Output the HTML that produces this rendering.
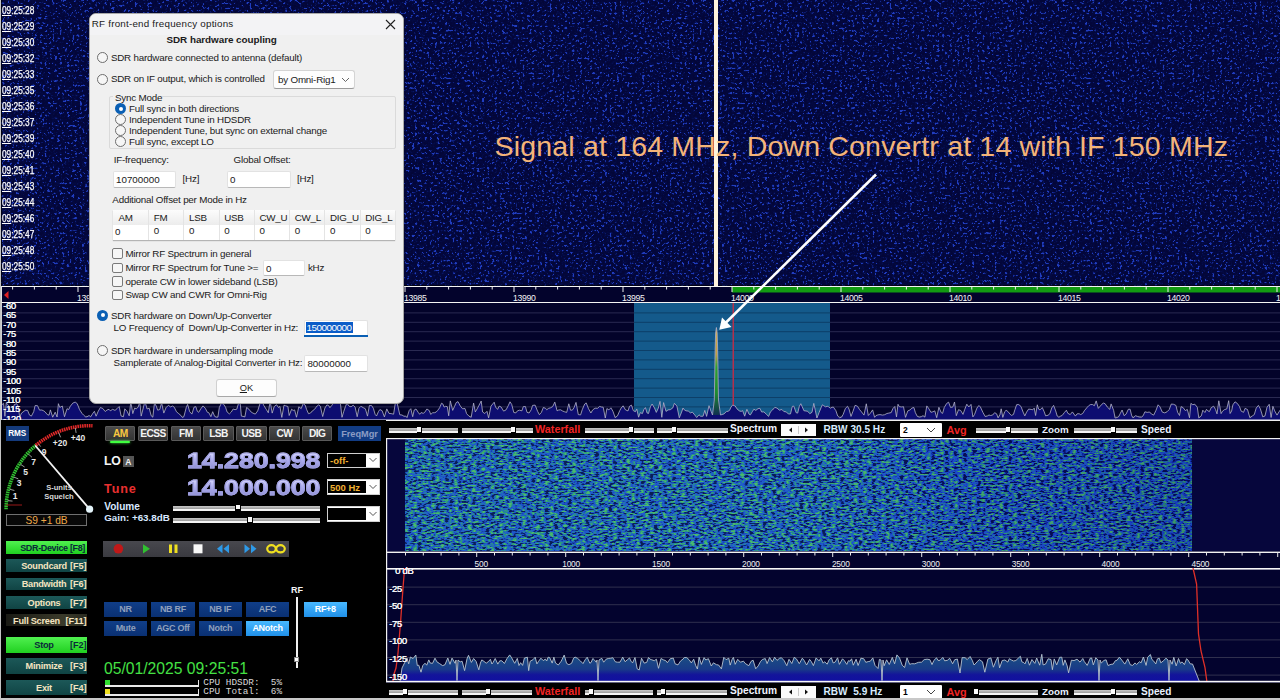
<!DOCTYPE html>
<html><head><meta charset="utf-8">
<style>
*{margin:0;padding:0;box-sizing:border-box}
html,body{width:1280px;height:700px;overflow:hidden;background:#000;font-family:'Liberation Sans',sans-serif;}
.a{position:absolute}
.t{position:absolute;white-space:pre;line-height:1}
</style></head><body>

<svg class="a" style="left:0;top:0" width="1280" height="287">
<defs>
<filter id="wf1" x="0" y="0" width="1280" height="287" filterUnits="userSpaceOnUse" color-interpolation-filters="sRGB">
<feTurbulence type="fractalNoise" baseFrequency="0.4" numOctaves="2" seed="11" result="n"/>
<feColorMatrix in="n" type="matrix" values="2.5 0 0 0 -0.75  2.5 0 0 0 -0.75  2.5 0 0 0 -0.75  0 0 0 0 1"/>
<feComponentTransfer>
<feFuncR type="table" tableValues="0.012 0.012 0.012 0.012 0.012 0.012 0.012 0.014 0.022 0.06 0.13"/>
<feFuncG type="table" tableValues="0.025 0.025 0.025 0.027 0.029 0.031 0.035 0.04 0.06 0.13 0.24"/>
<feFuncB type="table" tableValues="0.22 0.22 0.225 0.23 0.235 0.245 0.255 0.27 0.32 0.5 0.75"/>
</feComponentTransfer>
</filter>
</defs>
<rect x="0" y="0" width="1280" height="287" filter="url(#wf1)"/>
<rect x="0" y="0" width="1.6" height="287" fill="#000"/><rect x="0" y="0" width="0.9" height="287" fill="#d8d8d8"/><rect x="0" y="285.4" width="1280" height="1" fill="#000"/>
</svg>
<div class="t" style="left:2.2px;top:6.4px;font-size:10px;letter-spacing:0px;color:#fafafa;-webkit-text-stroke:0.25px #fff;transform:scaleX(0.83);transform-origin:0 0"><span style="text-decoration:underline;text-underline-offset:0.5px">09</span>:25:28</div>
<div class="t" style="left:2.2px;top:22.4px;font-size:10px;letter-spacing:0px;color:#fafafa;-webkit-text-stroke:0.25px #fff;transform:scaleX(0.83);transform-origin:0 0"><span style="text-decoration:underline;text-underline-offset:0.5px">09</span>:25:29</div>
<div class="t" style="left:2.2px;top:38.4px;font-size:10px;letter-spacing:0px;color:#fafafa;-webkit-text-stroke:0.25px #fff;transform:scaleX(0.83);transform-origin:0 0"><span style="text-decoration:underline;text-underline-offset:0.5px">09</span>:25:30</div>
<div class="t" style="left:2.2px;top:54.4px;font-size:10px;letter-spacing:0px;color:#fafafa;-webkit-text-stroke:0.25px #fff;transform:scaleX(0.83);transform-origin:0 0"><span style="text-decoration:underline;text-underline-offset:0.5px">09</span>:25:32</div>
<div class="t" style="left:2.2px;top:70.4px;font-size:10px;letter-spacing:0px;color:#fafafa;-webkit-text-stroke:0.25px #fff;transform:scaleX(0.83);transform-origin:0 0"><span style="text-decoration:underline;text-underline-offset:0.5px">09</span>:25:33</div>
<div class="t" style="left:2.2px;top:86.4px;font-size:10px;letter-spacing:0px;color:#fafafa;-webkit-text-stroke:0.25px #fff;transform:scaleX(0.83);transform-origin:0 0"><span style="text-decoration:underline;text-underline-offset:0.5px">09</span>:25:35</div>
<div class="t" style="left:2.2px;top:102.4px;font-size:10px;letter-spacing:0px;color:#fafafa;-webkit-text-stroke:0.25px #fff;transform:scaleX(0.83);transform-origin:0 0"><span style="text-decoration:underline;text-underline-offset:0.5px">09</span>:25:36</div>
<div class="t" style="left:2.2px;top:118.4px;font-size:10px;letter-spacing:0px;color:#fafafa;-webkit-text-stroke:0.25px #fff;transform:scaleX(0.83);transform-origin:0 0"><span style="text-decoration:underline;text-underline-offset:0.5px">09</span>:25:37</div>
<div class="t" style="left:2.2px;top:134.4px;font-size:10px;letter-spacing:0px;color:#fafafa;-webkit-text-stroke:0.25px #fff;transform:scaleX(0.83);transform-origin:0 0"><span style="text-decoration:underline;text-underline-offset:0.5px">09</span>:25:39</div>
<div class="t" style="left:2.2px;top:150.4px;font-size:10px;letter-spacing:0px;color:#fafafa;-webkit-text-stroke:0.25px #fff;transform:scaleX(0.83);transform-origin:0 0"><span style="text-decoration:underline;text-underline-offset:0.5px">09</span>:25:40</div>
<div class="t" style="left:2.2px;top:166.4px;font-size:10px;letter-spacing:0px;color:#fafafa;-webkit-text-stroke:0.25px #fff;transform:scaleX(0.83);transform-origin:0 0"><span style="text-decoration:underline;text-underline-offset:0.5px">09</span>:25:41</div>
<div class="t" style="left:2.2px;top:182.4px;font-size:10px;letter-spacing:0px;color:#fafafa;-webkit-text-stroke:0.25px #fff;transform:scaleX(0.83);transform-origin:0 0"><span style="text-decoration:underline;text-underline-offset:0.5px">09</span>:25:43</div>
<div class="t" style="left:2.2px;top:198.4px;font-size:10px;letter-spacing:0px;color:#fafafa;-webkit-text-stroke:0.25px #fff;transform:scaleX(0.83);transform-origin:0 0"><span style="text-decoration:underline;text-underline-offset:0.5px">09</span>:25:44</div>
<div class="t" style="left:2.2px;top:214.4px;font-size:10px;letter-spacing:0px;color:#fafafa;-webkit-text-stroke:0.25px #fff;transform:scaleX(0.83);transform-origin:0 0"><span style="text-decoration:underline;text-underline-offset:0.5px">09</span>:25:46</div>
<div class="t" style="left:2.2px;top:230.4px;font-size:10px;letter-spacing:0px;color:#fafafa;-webkit-text-stroke:0.25px #fff;transform:scaleX(0.83);transform-origin:0 0"><span style="text-decoration:underline;text-underline-offset:0.5px">09</span>:25:47</div>
<div class="t" style="left:2.2px;top:246.4px;font-size:10px;letter-spacing:0px;color:#fafafa;-webkit-text-stroke:0.25px #fff;transform:scaleX(0.83);transform-origin:0 0"><span style="text-decoration:underline;text-underline-offset:0.5px">09</span>:25:48</div>
<div class="t" style="left:2.2px;top:262.4px;font-size:10px;letter-spacing:0px;color:#fafafa;-webkit-text-stroke:0.25px #fff;transform:scaleX(0.83);transform-origin:0 0"><span style="text-decoration:underline;text-underline-offset:0.5px">09</span>:25:50</div>
<div class="a" style="left:714px;top:0;width:4px;height:287px;background:#fff3dc"></div>
<svg class="a" style="left:0;top:286px" width="1280" height="17"><rect x="0" y="0" width="1280" height="17" fill="#03032c"/><rect x="0" y="0" width="1280" height="1" fill="#f4f4f4"/><rect x="732" y="1" width="548" height="5.5" fill="#129a12"/><rect x="0" y="16" width="1280" height="1" fill="#f4f4f4"/><rect x="1" y="0" width="1" height="17" fill="#e0e0e0"/><polygon points="4,9 8.5,5 8.5,13" fill="#e02020"/><rect x="12.1" y="1" width="1" height="2.5" fill="#f0f0f0"/><rect x="33.9" y="1" width="1" height="2.5" fill="#f0f0f0"/><rect x="55.7" y="1" width="1" height="2.5" fill="#f0f0f0"/><rect x="77.5" y="1" width="1" height="5" fill="#f0f0f0"/><rect x="99.3" y="1" width="1" height="2.5" fill="#f0f0f0"/><rect x="121.1" y="1" width="1" height="2.5" fill="#f0f0f0"/><rect x="142.9" y="1" width="1" height="2.5" fill="#f0f0f0"/><rect x="164.7" y="1" width="1" height="2.5" fill="#f0f0f0"/><rect x="186.5" y="1" width="1" height="5" fill="#f0f0f0"/><rect x="208.3" y="1" width="1" height="2.5" fill="#f0f0f0"/><rect x="230.1" y="1" width="1" height="2.5" fill="#f0f0f0"/><rect x="251.9" y="1" width="1" height="2.5" fill="#f0f0f0"/><rect x="273.7" y="1" width="1" height="2.5" fill="#f0f0f0"/><rect x="295.5" y="1" width="1" height="5" fill="#f0f0f0"/><rect x="317.3" y="1" width="1" height="2.5" fill="#f0f0f0"/><rect x="339.1" y="1" width="1" height="2.5" fill="#f0f0f0"/><rect x="360.9" y="1" width="1" height="2.5" fill="#f0f0f0"/><rect x="382.7" y="1" width="1" height="2.5" fill="#f0f0f0"/><rect x="404.5" y="1" width="1" height="5" fill="#f0f0f0"/><rect x="426.3" y="1" width="1" height="2.5" fill="#f0f0f0"/><rect x="448.1" y="1" width="1" height="2.5" fill="#f0f0f0"/><rect x="469.9" y="1" width="1" height="2.5" fill="#f0f0f0"/><rect x="491.7" y="1" width="1" height="2.5" fill="#f0f0f0"/><rect x="513.5" y="1" width="1" height="5" fill="#f0f0f0"/><rect x="535.3" y="1" width="1" height="2.5" fill="#f0f0f0"/><rect x="557.1" y="1" width="1" height="2.5" fill="#f0f0f0"/><rect x="578.9" y="1" width="1" height="2.5" fill="#f0f0f0"/><rect x="600.7" y="1" width="1" height="2.5" fill="#f0f0f0"/><rect x="622.5" y="1" width="1" height="5" fill="#f0f0f0"/><rect x="644.3" y="1" width="1" height="2.5" fill="#f0f0f0"/><rect x="666.1" y="1" width="1" height="2.5" fill="#f0f0f0"/><rect x="687.9" y="1" width="1" height="2.5" fill="#f0f0f0"/><rect x="709.7" y="1" width="1" height="2.5" fill="#f0f0f0"/><rect x="731.5" y="1" width="1" height="5" fill="#f0f0f0"/><rect x="753.3" y="1" width="1" height="2.5" fill="#f0f0f0"/><rect x="775.1" y="1" width="1" height="2.5" fill="#f0f0f0"/><rect x="796.9" y="1" width="1" height="2.5" fill="#f0f0f0"/><rect x="818.7" y="1" width="1" height="2.5" fill="#f0f0f0"/><rect x="840.5" y="1" width="1" height="5" fill="#f0f0f0"/><rect x="862.3" y="1" width="1" height="2.5" fill="#f0f0f0"/><rect x="884.1" y="1" width="1" height="2.5" fill="#f0f0f0"/><rect x="905.9" y="1" width="1" height="2.5" fill="#f0f0f0"/><rect x="927.7" y="1" width="1" height="2.5" fill="#f0f0f0"/><rect x="949.5" y="1" width="1" height="5" fill="#f0f0f0"/><rect x="971.3" y="1" width="1" height="2.5" fill="#f0f0f0"/><rect x="993.1" y="1" width="1" height="2.5" fill="#f0f0f0"/><rect x="1014.9" y="1" width="1" height="2.5" fill="#f0f0f0"/><rect x="1036.7" y="1" width="1" height="2.5" fill="#f0f0f0"/><rect x="1058.5" y="1" width="1" height="5" fill="#f0f0f0"/><rect x="1080.3" y="1" width="1" height="2.5" fill="#f0f0f0"/><rect x="1102.1" y="1" width="1" height="2.5" fill="#f0f0f0"/><rect x="1123.9" y="1" width="1" height="2.5" fill="#f0f0f0"/><rect x="1145.7" y="1" width="1" height="2.5" fill="#f0f0f0"/><rect x="1167.5" y="1" width="1" height="5" fill="#f0f0f0"/><rect x="1189.3" y="1" width="1" height="2.5" fill="#f0f0f0"/><rect x="1211.1" y="1" width="1" height="2.5" fill="#f0f0f0"/><rect x="1232.9" y="1" width="1" height="2.5" fill="#f0f0f0"/><rect x="1254.7" y="1" width="1" height="2.5" fill="#f0f0f0"/><rect x="1276.5" y="1" width="1" height="5" fill="#f0f0f0"/></svg>
<div class="t" style="left:77.0px;top:293.5px;font-size:8.7px;letter-spacing:-0.35px;color:#f4f4f4">13970</div>
<div class="t" style="left:186.0px;top:293.5px;font-size:8.7px;letter-spacing:-0.35px;color:#f4f4f4">13975</div>
<div class="t" style="left:295.0px;top:293.5px;font-size:8.7px;letter-spacing:-0.35px;color:#f4f4f4">13980</div>
<div class="t" style="left:404.0px;top:293.5px;font-size:8.7px;letter-spacing:-0.35px;color:#f4f4f4">13985</div>
<div class="t" style="left:513.0px;top:293.5px;font-size:8.7px;letter-spacing:-0.35px;color:#f4f4f4">13990</div>
<div class="t" style="left:622.0px;top:293.5px;font-size:8.7px;letter-spacing:-0.35px;color:#f4f4f4">13995</div>
<div class="t" style="left:731.0px;top:293.5px;font-size:8.7px;letter-spacing:-0.35px;color:#f4f4f4">14000</div>
<div class="t" style="left:840.0px;top:293.5px;font-size:8.7px;letter-spacing:-0.35px;color:#f4f4f4">14005</div>
<div class="t" style="left:949.0px;top:293.5px;font-size:8.7px;letter-spacing:-0.35px;color:#f4f4f4">14010</div>
<div class="t" style="left:1058.0px;top:293.5px;font-size:8.7px;letter-spacing:-0.35px;color:#f4f4f4">14015</div>
<div class="t" style="left:1167.0px;top:293.5px;font-size:8.7px;letter-spacing:-0.35px;color:#f4f4f4">14020</div>
<div class="t" style="left:1276.0px;top:293.5px;font-size:8.7px;letter-spacing:-0.35px;color:#f4f4f4">14025</div>
<svg class="a" style="left:0;top:303px" width="1280" height="118"><rect x="0" y="0" width="1280" height="118" fill="#03032a"/><rect x="634" y="0" width="196" height="117" fill="#145a8b"/><rect x="0" y="9.4" width="634" height="1" fill="#2a2a52"/><rect x="830" y="9.4" width="450" height="1" fill="#2a2a52"/><rect x="634" y="9.4" width="196" height="1" fill="#0d3f68"/><rect x="0" y="18.8" width="634" height="1" fill="#2a2a52"/><rect x="830" y="18.8" width="450" height="1" fill="#2a2a52"/><rect x="634" y="18.8" width="196" height="1" fill="#0d3f68"/><rect x="0" y="28.2" width="634" height="1" fill="#2a2a52"/><rect x="830" y="28.2" width="450" height="1" fill="#2a2a52"/><rect x="634" y="28.2" width="196" height="1" fill="#0d3f68"/><rect x="0" y="37.6" width="634" height="1" fill="#2a2a52"/><rect x="830" y="37.6" width="450" height="1" fill="#2a2a52"/><rect x="634" y="37.6" width="196" height="1" fill="#0d3f68"/><rect x="0" y="47.0" width="634" height="1" fill="#2a2a52"/><rect x="830" y="47.0" width="450" height="1" fill="#2a2a52"/><rect x="634" y="47.0" width="196" height="1" fill="#0d3f68"/><rect x="0" y="56.4" width="634" height="1" fill="#2a2a52"/><rect x="830" y="56.4" width="450" height="1" fill="#2a2a52"/><rect x="634" y="56.4" width="196" height="1" fill="#0d3f68"/><rect x="0" y="65.8" width="634" height="1" fill="#2a2a52"/><rect x="830" y="65.8" width="450" height="1" fill="#2a2a52"/><rect x="634" y="65.8" width="196" height="1" fill="#0d3f68"/><rect x="0" y="75.2" width="634" height="1" fill="#2a2a52"/><rect x="830" y="75.2" width="450" height="1" fill="#2a2a52"/><rect x="634" y="75.2" width="196" height="1" fill="#0d3f68"/><rect x="0" y="84.6" width="634" height="1" fill="#2a2a52"/><rect x="830" y="84.6" width="450" height="1" fill="#2a2a52"/><rect x="634" y="84.6" width="196" height="1" fill="#0d3f68"/><rect x="0" y="94.0" width="634" height="1" fill="#2a2a52"/><rect x="830" y="94.0" width="450" height="1" fill="#2a2a52"/><rect x="634" y="94.0" width="196" height="1" fill="#0d3f68"/><rect x="0" y="103.4" width="634" height="1" fill="#2a2a52"/><rect x="830" y="103.4" width="450" height="1" fill="#2a2a52"/><rect x="634" y="103.4" width="196" height="1" fill="#0d3f68"/><rect x="0" y="112.8" width="634" height="1" fill="#2a2a52"/><rect x="830" y="112.8" width="450" height="1" fill="#2a2a52"/><rect x="634" y="112.8" width="196" height="1" fill="#0d3f68"/><rect x="732.5" y="0" width="1.5" height="117" fill="#b3304c"/><polygon points="0,117 0.0,99.1 1.4,102.2 3.5,100.3 4.9,113.3 6.3,99.8 8.7,102.7 10.7,108.8 12.9,107.9 14.2,101.7 16.6,100.7 18.2,103.1 19.7,114.1 21.5,110.1 23.0,109.0 25.2,107.3 27.6,107.4 29.5,112.1 31.4,113.1 33.7,108.7 35.1,102.6 37.5,102.7 39.5,107.1 41.8,107.0 43.8,107.9 45.2,109.0 47.2,111.5 49.0,112.2 50.4,106.9 52.7,114.2 55.2,109.2 57.1,114.0 58.4,100.7 59.8,104.5 62.3,103.0 64.5,113.7 67.0,105.7 68.6,106.6 70.4,103.1 72.8,100.1 75.2,99.1 77.2,100.6 79.6,106.7 82.0,110.4 83.6,112.1 85.5,113.8 87.0,113.8 89.1,112.5 90.6,113.9 93.0,110.1 94.4,108.3 96.1,113.2 98.3,108.1 100.4,104.5 102.8,105.5 105.2,108.5 107.0,107.0 109.0,106.3 110.3,107.8 112.7,106.3 115.0,107.4 117.2,105.5 119.2,103.5 121.1,113.0 123.4,113.7 124.8,105.8 127.2,108.5 129.2,112.8 130.8,98.9 132.8,110.6 134.6,105.1 136.4,105.8 138.2,104.0 139.8,98.9 141.2,113.1 143.0,106.0 144.9,98.3 147.1,106.0 149.2,105.2 151.2,112.8 152.8,114.2 154.5,99.8 156.2,103.0 157.7,107.2 159.8,106.5 161.6,99.7 163.8,110.1 166.0,104.7 168.4,102.3 170.5,103.9 172.6,103.0 174.3,104.3 176.5,108.8 178.8,110.7 180.9,112.5 182.5,114.6 183.9,113.6 186.2,104.7 187.6,101.3 189.7,108.7 191.9,111.1 194.0,104.2 195.8,103.6 197.3,108.3 198.7,109.3 200.8,105.8 203.0,102.9 205.3,105.3 207.4,109.3 208.8,109.7 210.9,113.7 212.7,108.7 214.6,113.3 216.2,114.2 217.9,114.1 219.3,104.6 221.4,100.1 223.7,101.3 225.6,104.4 227.1,109.0 229.4,110.9 231.3,109.0 233.2,106.0 235.0,106.7 236.8,106.2 238.5,100.4 240.0,98.1 241.4,113.1 242.8,113.4 244.9,113.9 246.6,104.4 248.9,106.2 251.2,109.1 252.9,110.1 255.3,111.1 257.7,107.9 260.0,100.5 262.2,98.5 263.8,102.5 266.3,106.4 268.3,109.8 270.1,98.2 272.2,110.1 274.2,103.6 276.5,101.7 278.5,104.5 279.9,103.4 281.8,114.4 284.0,102.2 285.4,102.7 287.9,103.5 289.2,112.5 291.6,106.2 293.2,107.5 294.6,106.9 296.5,114.2 298.8,103.8 301.2,105.6 303.2,100.5 305.1,102.0 306.7,106.7 308.5,110.7 310.6,110.0 312.2,108.0 314.5,106.4 315.8,104.6 317.1,103.0 318.6,101.9 320.3,103.2 322.7,113.5 324.9,105.0 326.9,101.9 328.5,102.4 329.9,104.7 331.7,102.5 333.4,100.0 335.5,100.5 337.3,98.8 338.8,99.0 340.3,99.5 342.0,114.3 343.8,108.3 345.5,103.4 346.8,100.2 349.2,103.3 351.1,103.8 353.2,102.2 355.1,104.2 357.2,113.7 358.9,105.3 360.9,103.3 363.3,104.7 365.4,105.8 367.5,113.1 369.4,102.5 371.6,102.6 373.4,105.4 375.1,111.3 376.5,113.0 378.5,108.5 379.9,106.5 382.1,107.7 384.4,113.9 386.8,105.9 389.0,110.4 391.1,110.6 393.6,111.2 395.7,97.7 397.3,100.7 399.8,111.8 402.0,112.0 404.0,113.3 405.7,113.1 407.0,114.6 409.2,107.5 410.8,105.7 412.7,113.7 414.2,107.0 416.0,106.0 418.3,109.5 419.7,111.3 421.0,109.6 423.2,110.3 424.5,109.6 426.9,106.0 429.3,107.6 430.7,111.4 432.6,109.8 434.5,109.7 436.1,109.1 437.6,107.5 439.6,104.8 441.5,100.2 442.8,100.9 444.1,104.1 445.7,103.3 447.3,103.7 448.7,112.8 450.3,97.9 452.7,107.4 454.5,103.5 456.1,99.7 458.0,98.6 460.4,103.2 462.6,105.8 465.0,105.5 466.6,110.7 469.0,113.2 471.2,114.3 473.6,100.1 475.3,108.9 477.2,105.8 479.0,102.3 481.2,98.0 482.6,109.0 484.8,110.5 487.0,108.3 488.6,114.9 491.0,103.0 492.7,101.0 494.2,99.2 495.5,104.0 497.6,106.4 499.2,103.1 501.1,104.0 503.6,108.1 506.0,106.9 508.2,102.8 510.0,98.8 511.7,101.4 513.8,109.5 515.9,109.9 517.5,107.8 519.5,107.2 521.9,107.8 523.3,103.6 525.4,103.5 527.0,109.3 529.1,110.0 531.2,106.8 532.6,102.4 535.1,102.1 537.6,108.3 539.4,111.7 541.4,109.4 543.3,104.5 545.4,105.2 546.8,106.8 548.3,105.5 550.5,104.8 552.7,103.6 554.8,99.1 557.1,107.8 558.6,107.0 560.6,106.8 562.6,108.0 564.6,108.8 566.7,109.4 568.8,100.8 570.5,107.2 572.4,107.1 574.1,104.5 576.0,99.4 578.3,111.6 580.6,111.9 582.2,106.8 584.7,101.0 586.2,99.9 588.5,105.7 590.9,110.0 592.7,106.9 595.1,105.2 597.5,105.3 599.7,103.4 601.2,104.0 603.2,104.2 605.3,115.0 606.9,105.6 608.9,106.9 610.9,104.8 612.9,108.2 615.2,114.7 617.5,112.8 619.8,107.5 621.2,105.0 623.1,102.8 625.5,106.9 628.0,107.9 629.5,103.3 631.4,102.1 633.4,107.7 635.4,108.7 636.8,106.1 638.6,114.2 640.3,109.6 642.4,110.6 643.9,106.5 645.4,104.6 647.1,110.0 648.5,110.5 650.4,103.8 652.1,101.0 654.5,105.0 656.3,109.4 658.3,105.2 660.0,98.4 661.8,114.3 663.6,99.6 666.0,108.4 668.1,106.9 670.3,106.7 672.8,104.9 674.4,100.3 676.9,103.1 679.3,114.8 681.6,109.1 683.0,105.0 684.5,107.1 686.0,107.8 688.3,108.1 690.5,109.9 692.3,109.1 694.7,111.9 696.7,114.5 699.0,111.8 700.7,113.3 703.1,113.2 704.8,107.4 706.6,113.4 709.0,102.7 711.0,108.2 712.5,112.0 714.3,97.0 715.2,45.0 715.6,30.0 716.4,24.5 717.2,30.0 717.6,45.0 718.5,97.0 720.5,112.0 724.0,110.9 726.4,108.6 728.0,108.3 729.6,107.3 731.0,104.0 732.7,102.1 735.2,103.0 737.0,105.9 739.4,107.9 741.2,108.4 742.6,107.6 744.7,113.2 746.9,106.3 749.0,111.1 750.4,111.9 752.5,108.4 753.9,106.2 755.8,107.4 758.0,105.7 759.9,105.3 761.6,109.0 763.9,108.9 766.2,111.1 768.6,113.4 770.4,108.9 772.5,107.0 774.8,104.4 777.0,105.1 779.4,107.2 781.9,106.5 783.8,108.5 786.3,108.9 788.4,111.0 790.5,110.9 792.3,103.4 793.8,103.1 796.1,109.7 797.7,110.1 799.3,103.4 800.8,100.7 802.2,103.7 803.9,107.7 806.0,108.0 807.7,108.3 809.8,110.7 812.0,109.3 813.8,100.4 815.4,107.8 816.9,115.0 819.1,109.5 821.0,104.8 822.4,101.8 823.8,102.8 825.7,103.9 827.2,103.3 828.6,103.8 830.3,105.2 832.0,104.3 833.4,104.1 835.9,107.7 837.7,113.0 839.7,114.8 841.6,114.1 843.2,111.3 845.4,105.4 847.5,103.3 849.0,106.0 851.0,113.4 853.0,108.2 855.1,102.3 857.5,103.3 859.6,106.6 861.5,108.9 864.0,112.1 866.3,100.8 868.3,112.5 870.3,110.3 872.6,106.9 874.6,114.3 876.0,112.6 877.9,111.9 880.0,111.6 882.5,112.1 884.7,111.7 886.9,110.5 888.8,110.1 891.2,109.6 892.9,105.6 894.8,103.5 896.5,113.9 898.0,101.3 899.3,103.7 901.7,104.0 903.5,103.7 905.5,114.3 907.8,107.9 910.2,106.9 911.8,105.1 913.9,104.5 915.4,109.7 917.3,113.4 919.4,114.1 921.4,113.7 923.0,112.7 924.9,114.1 926.8,102.9 928.9,105.8 930.9,109.3 932.7,108.8 934.8,107.9 936.7,114.7 938.9,104.3 941.2,109.6 942.6,110.4 944.2,104.6 946.6,100.5 948.6,99.2 950.5,104.4 952.8,104.1 954.5,99.0 956.3,112.7 958.5,106.7 960.7,107.5 963.0,111.4 964.6,106.8 966.8,101.2 968.8,104.0 971.0,101.4 972.9,113.9 974.5,111.6 976.9,105.1 978.9,102.5 980.4,104.0 982.9,109.4 985.2,113.5 987.5,112.9 989.0,112.0 990.6,112.5 992.7,112.0 994.6,109.7 996.6,110.8 998.1,114.9 999.9,111.9 1001.2,105.8 1002.8,114.4 1004.7,108.7 1006.1,107.3 1007.8,108.4 1010.1,111.2 1011.5,112.4 1013.5,111.4 1014.9,106.7 1016.7,101.6 1018.8,101.6 1021.0,103.5 1023.1,109.1 1024.8,112.9 1026.6,109.1 1028.6,106.1 1031.1,106.4 1032.8,106.8 1034.2,105.1 1035.6,112.5 1037.3,101.8 1038.6,106.1 1040.0,106.9 1042.3,104.6 1044.2,108.8 1045.6,112.8 1048.0,112.3 1049.9,110.7 1051.7,105.0 1053.6,102.4 1055.7,107.9 1057.2,113.0 1058.9,114.3 1060.5,113.2 1062.1,112.5 1064.5,109.4 1066.4,107.2 1067.8,110.3 1070.2,111.6 1072.4,108.9 1073.9,111.0 1075.4,113.1 1077.0,110.9 1079.1,110.7 1080.7,111.6 1082.8,110.4 1084.3,107.8 1086.7,104.9 1088.6,102.8 1090.4,101.6 1092.4,101.5 1094.4,102.7 1096.2,97.9 1098.3,105.4 1100.3,103.1 1101.9,101.2 1103.4,100.1 1105.1,100.7 1107.3,104.0 1109.8,106.4 1111.1,100.9 1113.6,107.3 1115.1,115.0 1117.6,114.4 1118.9,113.4 1120.4,110.2 1122.1,107.0 1124.1,112.7 1126.1,111.1 1128.3,106.3 1130.1,106.2 1131.7,112.7 1133.2,115.0 1135.4,112.7 1137.6,113.5 1139.2,114.0 1141.4,114.2 1143.1,112.8 1144.9,108.8 1147.2,109.4 1149.6,109.0 1151.4,111.0 1153.7,112.1 1156.0,107.3 1158.1,101.8 1160.0,103.9 1162.3,109.1 1164.8,109.9 1167.0,108.8 1169.2,106.6 1171.3,101.0 1173.6,101.3 1175.9,102.4 1177.6,109.3 1179.5,112.5 1181.1,103.6 1183.2,104.7 1185.3,107.6 1187.3,106.4 1189.5,114.8 1190.9,100.4 1192.8,101.7 1194.8,101.2 1197.3,104.3 1198.8,115.0 1201.3,112.9 1202.8,107.2 1204.9,109.5 1206.5,106.3 1208.1,108.0 1209.4,108.6 1211.2,104.7 1213.6,103.2 1215.5,106.4 1217.0,110.9 1218.8,97.8 1221.1,110.6 1222.5,108.2 1224.5,106.6 1226.8,105.9 1228.7,97.7 1230.1,110.5 1231.6,108.0 1232.9,101.8 1235.0,98.8 1237.4,100.5 1239.5,103.6 1241.2,108.2 1243.6,109.3 1245.0,105.4 1247.5,106.5 1249.9,114.8 1252.4,112.9 1254.3,111.6 1256.2,105.1 1258.4,102.4 1260.4,105.9 1262.8,113.9 1265.0,112.9 1267.0,104.3 1269.2,101.3 1271.1,114.5 1272.9,103.3 1274.7,107.9 1277.0,112.1 1278.9,109.0 1280.4,106.8 1282,117" fill="#0d0d70"/><defs><linearGradient id="pkg" x1="0" y1="0" x2="0" y2="1"><stop offset="0" stop-color="#d0b040"/><stop offset="0.3" stop-color="#c0a040"/><stop offset="0.45" stop-color="#30a030"/><stop offset="0.75" stop-color="#208a30"/><stop offset="1" stop-color="#103050"/></linearGradient></defs><polygon points="713,112 714.5,97 715.3,45 715.7,30 716.4,25 717.1,30 717.5,45 718.3,97 719.8,112" fill="url(#pkg)"/><polyline points="0.0,99.1 1.4,102.2 3.5,100.3 4.9,113.3 6.3,99.8 8.7,102.7 10.7,108.8 12.9,107.9 14.2,101.7 16.6,100.7 18.2,103.1 19.7,114.1 21.5,110.1 23.0,109.0 25.2,107.3 27.6,107.4 29.5,112.1 31.4,113.1 33.7,108.7 35.1,102.6 37.5,102.7 39.5,107.1 41.8,107.0 43.8,107.9 45.2,109.0 47.2,111.5 49.0,112.2 50.4,106.9 52.7,114.2 55.2,109.2 57.1,114.0 58.4,100.7 59.8,104.5 62.3,103.0 64.5,113.7 67.0,105.7 68.6,106.6 70.4,103.1 72.8,100.1 75.2,99.1 77.2,100.6 79.6,106.7 82.0,110.4 83.6,112.1 85.5,113.8 87.0,113.8 89.1,112.5 90.6,113.9 93.0,110.1 94.4,108.3 96.1,113.2 98.3,108.1 100.4,104.5 102.8,105.5 105.2,108.5 107.0,107.0 109.0,106.3 110.3,107.8 112.7,106.3 115.0,107.4 117.2,105.5 119.2,103.5 121.1,113.0 123.4,113.7 124.8,105.8 127.2,108.5 129.2,112.8 130.8,98.9 132.8,110.6 134.6,105.1 136.4,105.8 138.2,104.0 139.8,98.9 141.2,113.1 143.0,106.0 144.9,98.3 147.1,106.0 149.2,105.2 151.2,112.8 152.8,114.2 154.5,99.8 156.2,103.0 157.7,107.2 159.8,106.5 161.6,99.7 163.8,110.1 166.0,104.7 168.4,102.3 170.5,103.9 172.6,103.0 174.3,104.3 176.5,108.8 178.8,110.7 180.9,112.5 182.5,114.6 183.9,113.6 186.2,104.7 187.6,101.3 189.7,108.7 191.9,111.1 194.0,104.2 195.8,103.6 197.3,108.3 198.7,109.3 200.8,105.8 203.0,102.9 205.3,105.3 207.4,109.3 208.8,109.7 210.9,113.7 212.7,108.7 214.6,113.3 216.2,114.2 217.9,114.1 219.3,104.6 221.4,100.1 223.7,101.3 225.6,104.4 227.1,109.0 229.4,110.9 231.3,109.0 233.2,106.0 235.0,106.7 236.8,106.2 238.5,100.4 240.0,98.1 241.4,113.1 242.8,113.4 244.9,113.9 246.6,104.4 248.9,106.2 251.2,109.1 252.9,110.1 255.3,111.1 257.7,107.9 260.0,100.5 262.2,98.5 263.8,102.5 266.3,106.4 268.3,109.8 270.1,98.2 272.2,110.1 274.2,103.6 276.5,101.7 278.5,104.5 279.9,103.4 281.8,114.4 284.0,102.2 285.4,102.7 287.9,103.5 289.2,112.5 291.6,106.2 293.2,107.5 294.6,106.9 296.5,114.2 298.8,103.8 301.2,105.6 303.2,100.5 305.1,102.0 306.7,106.7 308.5,110.7 310.6,110.0 312.2,108.0 314.5,106.4 315.8,104.6 317.1,103.0 318.6,101.9 320.3,103.2 322.7,113.5 324.9,105.0 326.9,101.9 328.5,102.4 329.9,104.7 331.7,102.5 333.4,100.0 335.5,100.5 337.3,98.8 338.8,99.0 340.3,99.5 342.0,114.3 343.8,108.3 345.5,103.4 346.8,100.2 349.2,103.3 351.1,103.8 353.2,102.2 355.1,104.2 357.2,113.7 358.9,105.3 360.9,103.3 363.3,104.7 365.4,105.8 367.5,113.1 369.4,102.5 371.6,102.6 373.4,105.4 375.1,111.3 376.5,113.0 378.5,108.5 379.9,106.5 382.1,107.7 384.4,113.9 386.8,105.9 389.0,110.4 391.1,110.6 393.6,111.2 395.7,97.7 397.3,100.7 399.8,111.8 402.0,112.0 404.0,113.3 405.7,113.1 407.0,114.6 409.2,107.5 410.8,105.7 412.7,113.7 414.2,107.0 416.0,106.0 418.3,109.5 419.7,111.3 421.0,109.6 423.2,110.3 424.5,109.6 426.9,106.0 429.3,107.6 430.7,111.4 432.6,109.8 434.5,109.7 436.1,109.1 437.6,107.5 439.6,104.8 441.5,100.2 442.8,100.9 444.1,104.1 445.7,103.3 447.3,103.7 448.7,112.8 450.3,97.9 452.7,107.4 454.5,103.5 456.1,99.7 458.0,98.6 460.4,103.2 462.6,105.8 465.0,105.5 466.6,110.7 469.0,113.2 471.2,114.3 473.6,100.1 475.3,108.9 477.2,105.8 479.0,102.3 481.2,98.0 482.6,109.0 484.8,110.5 487.0,108.3 488.6,114.9 491.0,103.0 492.7,101.0 494.2,99.2 495.5,104.0 497.6,106.4 499.2,103.1 501.1,104.0 503.6,108.1 506.0,106.9 508.2,102.8 510.0,98.8 511.7,101.4 513.8,109.5 515.9,109.9 517.5,107.8 519.5,107.2 521.9,107.8 523.3,103.6 525.4,103.5 527.0,109.3 529.1,110.0 531.2,106.8 532.6,102.4 535.1,102.1 537.6,108.3 539.4,111.7 541.4,109.4 543.3,104.5 545.4,105.2 546.8,106.8 548.3,105.5 550.5,104.8 552.7,103.6 554.8,99.1 557.1,107.8 558.6,107.0 560.6,106.8 562.6,108.0 564.6,108.8 566.7,109.4 568.8,100.8 570.5,107.2 572.4,107.1 574.1,104.5 576.0,99.4 578.3,111.6 580.6,111.9 582.2,106.8 584.7,101.0 586.2,99.9 588.5,105.7 590.9,110.0 592.7,106.9 595.1,105.2 597.5,105.3 599.7,103.4 601.2,104.0 603.2,104.2 605.3,115.0 606.9,105.6 608.9,106.9 610.9,104.8 612.9,108.2 615.2,114.7 617.5,112.8 619.8,107.5 621.2,105.0 623.1,102.8 625.5,106.9 628.0,107.9 629.5,103.3 631.4,102.1 633.4,107.7 635.4,108.7 636.8,106.1 638.6,114.2 640.3,109.6 642.4,110.6 643.9,106.5 645.4,104.6 647.1,110.0 648.5,110.5 650.4,103.8 652.1,101.0 654.5,105.0 656.3,109.4 658.3,105.2 660.0,98.4 661.8,114.3 663.6,99.6 666.0,108.4 668.1,106.9 670.3,106.7 672.8,104.9 674.4,100.3 676.9,103.1 679.3,114.8 681.6,109.1 683.0,105.0 684.5,107.1 686.0,107.8 688.3,108.1 690.5,109.9 692.3,109.1 694.7,111.9 696.7,114.5 699.0,111.8 700.7,113.3 703.1,113.2 704.8,107.4 706.6,113.4 709.0,102.7 711.0,108.2 712.5,112.0 714.3,97.0 715.2,45.0 715.6,30.0 716.4,24.5 717.2,30.0 717.6,45.0 718.5,97.0 720.5,112.0 724.0,110.9 726.4,108.6 728.0,108.3 729.6,107.3 731.0,104.0 732.7,102.1 735.2,103.0 737.0,105.9 739.4,107.9 741.2,108.4 742.6,107.6 744.7,113.2 746.9,106.3 749.0,111.1 750.4,111.9 752.5,108.4 753.9,106.2 755.8,107.4 758.0,105.7 759.9,105.3 761.6,109.0 763.9,108.9 766.2,111.1 768.6,113.4 770.4,108.9 772.5,107.0 774.8,104.4 777.0,105.1 779.4,107.2 781.9,106.5 783.8,108.5 786.3,108.9 788.4,111.0 790.5,110.9 792.3,103.4 793.8,103.1 796.1,109.7 797.7,110.1 799.3,103.4 800.8,100.7 802.2,103.7 803.9,107.7 806.0,108.0 807.7,108.3 809.8,110.7 812.0,109.3 813.8,100.4 815.4,107.8 816.9,115.0 819.1,109.5 821.0,104.8 822.4,101.8 823.8,102.8 825.7,103.9 827.2,103.3 828.6,103.8 830.3,105.2 832.0,104.3 833.4,104.1 835.9,107.7 837.7,113.0 839.7,114.8 841.6,114.1 843.2,111.3 845.4,105.4 847.5,103.3 849.0,106.0 851.0,113.4 853.0,108.2 855.1,102.3 857.5,103.3 859.6,106.6 861.5,108.9 864.0,112.1 866.3,100.8 868.3,112.5 870.3,110.3 872.6,106.9 874.6,114.3 876.0,112.6 877.9,111.9 880.0,111.6 882.5,112.1 884.7,111.7 886.9,110.5 888.8,110.1 891.2,109.6 892.9,105.6 894.8,103.5 896.5,113.9 898.0,101.3 899.3,103.7 901.7,104.0 903.5,103.7 905.5,114.3 907.8,107.9 910.2,106.9 911.8,105.1 913.9,104.5 915.4,109.7 917.3,113.4 919.4,114.1 921.4,113.7 923.0,112.7 924.9,114.1 926.8,102.9 928.9,105.8 930.9,109.3 932.7,108.8 934.8,107.9 936.7,114.7 938.9,104.3 941.2,109.6 942.6,110.4 944.2,104.6 946.6,100.5 948.6,99.2 950.5,104.4 952.8,104.1 954.5,99.0 956.3,112.7 958.5,106.7 960.7,107.5 963.0,111.4 964.6,106.8 966.8,101.2 968.8,104.0 971.0,101.4 972.9,113.9 974.5,111.6 976.9,105.1 978.9,102.5 980.4,104.0 982.9,109.4 985.2,113.5 987.5,112.9 989.0,112.0 990.6,112.5 992.7,112.0 994.6,109.7 996.6,110.8 998.1,114.9 999.9,111.9 1001.2,105.8 1002.8,114.4 1004.7,108.7 1006.1,107.3 1007.8,108.4 1010.1,111.2 1011.5,112.4 1013.5,111.4 1014.9,106.7 1016.7,101.6 1018.8,101.6 1021.0,103.5 1023.1,109.1 1024.8,112.9 1026.6,109.1 1028.6,106.1 1031.1,106.4 1032.8,106.8 1034.2,105.1 1035.6,112.5 1037.3,101.8 1038.6,106.1 1040.0,106.9 1042.3,104.6 1044.2,108.8 1045.6,112.8 1048.0,112.3 1049.9,110.7 1051.7,105.0 1053.6,102.4 1055.7,107.9 1057.2,113.0 1058.9,114.3 1060.5,113.2 1062.1,112.5 1064.5,109.4 1066.4,107.2 1067.8,110.3 1070.2,111.6 1072.4,108.9 1073.9,111.0 1075.4,113.1 1077.0,110.9 1079.1,110.7 1080.7,111.6 1082.8,110.4 1084.3,107.8 1086.7,104.9 1088.6,102.8 1090.4,101.6 1092.4,101.5 1094.4,102.7 1096.2,97.9 1098.3,105.4 1100.3,103.1 1101.9,101.2 1103.4,100.1 1105.1,100.7 1107.3,104.0 1109.8,106.4 1111.1,100.9 1113.6,107.3 1115.1,115.0 1117.6,114.4 1118.9,113.4 1120.4,110.2 1122.1,107.0 1124.1,112.7 1126.1,111.1 1128.3,106.3 1130.1,106.2 1131.7,112.7 1133.2,115.0 1135.4,112.7 1137.6,113.5 1139.2,114.0 1141.4,114.2 1143.1,112.8 1144.9,108.8 1147.2,109.4 1149.6,109.0 1151.4,111.0 1153.7,112.1 1156.0,107.3 1158.1,101.8 1160.0,103.9 1162.3,109.1 1164.8,109.9 1167.0,108.8 1169.2,106.6 1171.3,101.0 1173.6,101.3 1175.9,102.4 1177.6,109.3 1179.5,112.5 1181.1,103.6 1183.2,104.7 1185.3,107.6 1187.3,106.4 1189.5,114.8 1190.9,100.4 1192.8,101.7 1194.8,101.2 1197.3,104.3 1198.8,115.0 1201.3,112.9 1202.8,107.2 1204.9,109.5 1206.5,106.3 1208.1,108.0 1209.4,108.6 1211.2,104.7 1213.6,103.2 1215.5,106.4 1217.0,110.9 1218.8,97.8 1221.1,110.6 1222.5,108.2 1224.5,106.6 1226.8,105.9 1228.7,97.7 1230.1,110.5 1231.6,108.0 1232.9,101.8 1235.0,98.8 1237.4,100.5 1239.5,103.6 1241.2,108.2 1243.6,109.3 1245.0,105.4 1247.5,106.5 1249.9,114.8 1252.4,112.9 1254.3,111.6 1256.2,105.1 1258.4,102.4 1260.4,105.9 1262.8,113.9 1265.0,112.9 1267.0,104.3 1269.2,101.3 1271.1,114.5 1272.9,103.3 1274.7,107.9 1277.0,112.1 1278.9,109.0 1280.4,106.8" fill="none" stroke="#b4b4c8" stroke-width="0.8"/><rect x="0" y="116.5" width="1280" height="1.5" fill="#f0f0f0"/><rect x="1" y="0" width="1" height="117" fill="#d0d0d0"/></svg>
<div class="t" style="left:3px;top:301.0px;font-size:9.6px;letter-spacing:-0.4px;color:#f8f8f8;text-shadow:0.35px 0 0 #fff">-60</div>
<div class="t" style="left:3px;top:310.4px;font-size:9.6px;letter-spacing:-0.4px;color:#f8f8f8;text-shadow:0.35px 0 0 #fff">-65</div>
<div class="t" style="left:3px;top:319.8px;font-size:9.6px;letter-spacing:-0.4px;color:#f8f8f8;text-shadow:0.35px 0 0 #fff">-70</div>
<div class="t" style="left:3px;top:329.2px;font-size:9.6px;letter-spacing:-0.4px;color:#f8f8f8;text-shadow:0.35px 0 0 #fff">-75</div>
<div class="t" style="left:3px;top:338.6px;font-size:9.6px;letter-spacing:-0.4px;color:#f8f8f8;text-shadow:0.35px 0 0 #fff">-80</div>
<div class="t" style="left:3px;top:348.0px;font-size:9.6px;letter-spacing:-0.4px;color:#f8f8f8;text-shadow:0.35px 0 0 #fff">-85</div>
<div class="t" style="left:3px;top:357.4px;font-size:9.6px;letter-spacing:-0.4px;color:#f8f8f8;text-shadow:0.35px 0 0 #fff">-90</div>
<div class="t" style="left:3px;top:366.8px;font-size:9.6px;letter-spacing:-0.4px;color:#f8f8f8;text-shadow:0.35px 0 0 #fff">-95</div>
<div class="t" style="left:3px;top:376.2px;font-size:9.6px;letter-spacing:-0.4px;color:#f8f8f8;text-shadow:0.35px 0 0 #fff">-100</div>
<div class="t" style="left:3px;top:385.6px;font-size:9.6px;letter-spacing:-0.4px;color:#f8f8f8;text-shadow:0.35px 0 0 #fff">-105</div>
<div class="t" style="left:3px;top:395.0px;font-size:9.6px;letter-spacing:-0.4px;color:#f8f8f8;text-shadow:0.35px 0 0 #fff">-110</div>
<div class="t" style="left:3px;top:404.4px;font-size:9.6px;letter-spacing:-0.4px;color:#f8f8f8;text-shadow:0.35px 0 0 #fff">-115</div>
<div class="t" style="left:3px;top:413.8px;font-size:9.6px;letter-spacing:-0.4px;color:#f8f8f8;text-shadow:0.35px 0 0 #fff">-120</div>
<div class="a" style="left:389px;top:428px;width:27.5px;height:5px;background:linear-gradient(#c8c8c8,#9a9a9a);border-bottom:2px solid #f4f4f4"></div><div class="a" style="left:421.5px;top:428px;width:36.5px;height:5px;background:linear-gradient(#c8c8c8,#9a9a9a);border-bottom:2px solid #f4f4f4"></div><div class="a" style="left:417px;top:427px;width:4px;height:4.7px;background:#fafafa"></div><div class="a" style="left:462px;top:428px;width:48.5px;height:5px;background:linear-gradient(#c8c8c8,#9a9a9a);border-bottom:2px solid #f4f4f4"></div><div class="a" style="left:515.5px;top:428px;width:17.5px;height:5px;background:linear-gradient(#c8c8c8,#9a9a9a);border-bottom:2px solid #f4f4f4"></div><div class="a" style="left:511px;top:427px;width:4px;height:4.7px;background:#fafafa"></div><div class="a" style="left:585px;top:428px;width:43.5px;height:5px;background:linear-gradient(#c8c8c8,#9a9a9a);border-bottom:2px solid #f4f4f4"></div><div class="a" style="left:633.5px;top:428px;width:20.5px;height:5px;background:linear-gradient(#c8c8c8,#9a9a9a);border-bottom:2px solid #f4f4f4"></div><div class="a" style="left:629px;top:427px;width:4px;height:4.7px;background:#fafafa"></div><div class="a" style="left:657px;top:428px;width:14.5px;height:5px;background:linear-gradient(#c8c8c8,#9a9a9a);border-bottom:2px solid #f4f4f4"></div><div class="a" style="left:676.5px;top:428px;width:51.5px;height:5px;background:linear-gradient(#c8c8c8,#9a9a9a);border-bottom:2px solid #f4f4f4"></div><div class="a" style="left:672px;top:427px;width:4px;height:4.7px;background:#fafafa"></div><div class="a" style="left:976px;top:428px;width:29.5px;height:5px;background:linear-gradient(#c8c8c8,#9a9a9a);border-bottom:2px solid #f4f4f4"></div><div class="a" style="left:1010.5px;top:428px;width:27.5px;height:5px;background:linear-gradient(#c8c8c8,#9a9a9a);border-bottom:2px solid #f4f4f4"></div><div class="a" style="left:1006px;top:427px;width:4px;height:4.7px;background:#fafafa"></div><div class="a" style="left:1074px;top:428px;width:36.5px;height:5px;background:linear-gradient(#c8c8c8,#9a9a9a);border-bottom:2px solid #f4f4f4"></div><div class="a" style="left:1115.5px;top:428px;width:21.5px;height:5px;background:linear-gradient(#c8c8c8,#9a9a9a);border-bottom:2px solid #f4f4f4"></div><div class="a" style="left:1111px;top:427px;width:4px;height:4.7px;background:#fafafa"></div><div class="t" style="left:535px;top:424.3px;font-weight:bold;font-size:10.8px;color:#f02424">Waterfall</div><div class="t" style="left:730px;top:424.3px;font-weight:bold;font-size:10.2px;color:#f0f4ff">Spectrum</div><div class="a" style="left:781px;top:424px;width:35px;height:12px;background:#fafafa"></div><div class="a" style="left:798px;top:426px;width:1px;height:8px;background:#c8c8c8"></div><svg class="a" style="left:781px;top:424px" width="35" height="12"><polygon points="8,6 11,3.5 11,8.5" fill="#111"/><polygon points="27,6 24,3.5 24,8.5" fill="#111"/></svg><div class="t" style="left:823.5px;top:424.5px;font-weight:bold;font-size:10.1px;color:#d8ecff">RBW 30.5 Hz</div><div class="a" style="left:900px;top:423px;width:42px;height:14px;background:#fff;border-radius:1px"></div><div class="t" style="left:903px;top:425.5px;font-weight:bold;font-size:8.5px;color:#000">2</div><svg class="a" style="left:926px;top:427px" width="10" height="6"><polyline points="1,1 5,5 9,1" fill="none" stroke="#444" stroke-width="1"/></svg><div class="t" style="left:946.5px;top:424.5px;font-weight:bold;font-size:10.8px;color:#f02424">Avg</div><div class="t" style="left:1042px;top:424.5px;font-weight:bold;font-size:9.8px;color:#e8f0ff">Zoom</div><div class="t" style="left:1141px;top:424.5px;font-weight:bold;font-size:10.1px;color:#e8f0ff">Speed</div>
<div class="a" style="left:389px;top:690px;width:13.5px;height:5px;background:linear-gradient(#c8c8c8,#9a9a9a);border-bottom:2px solid #f4f4f4"></div><div class="a" style="left:407.5px;top:690px;width:50.5px;height:5px;background:linear-gradient(#c8c8c8,#9a9a9a);border-bottom:2px solid #f4f4f4"></div><div class="a" style="left:403px;top:689px;width:4px;height:4.7px;background:#fafafa"></div><div class="a" style="left:462px;top:690px;width:23.5px;height:5px;background:linear-gradient(#c8c8c8,#9a9a9a);border-bottom:2px solid #f4f4f4"></div><div class="a" style="left:490.5px;top:690px;width:41.5px;height:5px;background:linear-gradient(#c8c8c8,#9a9a9a);border-bottom:2px solid #f4f4f4"></div><div class="a" style="left:486px;top:689px;width:4px;height:4.7px;background:#fafafa"></div><div class="a" style="left:585px;top:690px;width:3.5px;height:5px;background:linear-gradient(#c8c8c8,#9a9a9a);border-bottom:2px solid #f4f4f4"></div><div class="a" style="left:593.5px;top:690px;width:59.5px;height:5px;background:linear-gradient(#c8c8c8,#9a9a9a);border-bottom:2px solid #f4f4f4"></div><div class="a" style="left:589px;top:689px;width:4px;height:4.7px;background:#fafafa"></div><div class="a" style="left:657px;top:690px;width:3.5px;height:5px;background:linear-gradient(#c8c8c8,#9a9a9a);border-bottom:2px solid #f4f4f4"></div><div class="a" style="left:665.5px;top:690px;width:61.5px;height:5px;background:linear-gradient(#c8c8c8,#9a9a9a);border-bottom:2px solid #f4f4f4"></div><div class="a" style="left:661px;top:689px;width:4px;height:4.7px;background:#fafafa"></div><div class="a" style="left:974px;top:690px;width:-0.5px;height:5px;background:linear-gradient(#c8c8c8,#9a9a9a);border-bottom:2px solid #f4f4f4"></div><div class="a" style="left:978.5px;top:690px;width:59.5px;height:5px;background:linear-gradient(#c8c8c8,#9a9a9a);border-bottom:2px solid #f4f4f4"></div><div class="a" style="left:974px;top:689px;width:4px;height:4.7px;background:#fafafa"></div><div class="a" style="left:1074px;top:690px;width:36.5px;height:5px;background:linear-gradient(#c8c8c8,#9a9a9a);border-bottom:2px solid #f4f4f4"></div><div class="a" style="left:1115.5px;top:690px;width:21.5px;height:5px;background:linear-gradient(#c8c8c8,#9a9a9a);border-bottom:2px solid #f4f4f4"></div><div class="a" style="left:1111px;top:689px;width:4px;height:4.7px;background:#fafafa"></div><div class="t" style="left:535px;top:686.3px;font-weight:bold;font-size:10.8px;color:#f02424">Waterfall</div><div class="t" style="left:730px;top:686.3px;font-weight:bold;font-size:10.2px;color:#f0f4ff">Spectrum</div><div class="a" style="left:781px;top:686px;width:35px;height:12px;background:#fafafa"></div><div class="a" style="left:798px;top:688px;width:1px;height:8px;background:#c8c8c8"></div><svg class="a" style="left:781px;top:686px" width="35" height="12"><polygon points="8,6 11,3.5 11,8.5" fill="#111"/><polygon points="27,6 24,3.5 24,8.5" fill="#111"/></svg><div class="t" style="left:823.5px;top:686.5px;font-weight:bold;font-size:10.1px;color:#d8ecff">RBW&nbsp; 5.9 Hz</div><div class="a" style="left:900px;top:685px;width:42px;height:14px;background:#fff;border-radius:1px"></div><div class="t" style="left:903px;top:687.5px;font-weight:bold;font-size:8.5px;color:#000">1</div><svg class="a" style="left:926px;top:689px" width="10" height="6"><polyline points="1,1 5,5 9,1" fill="none" stroke="#444" stroke-width="1"/></svg><div class="t" style="left:946.5px;top:686.5px;font-weight:bold;font-size:10.8px;color:#f02424">Avg</div><div class="t" style="left:1042px;top:686.5px;font-weight:bold;font-size:9.8px;color:#e8f0ff">Zoom</div><div class="t" style="left:1141px;top:686.5px;font-weight:bold;font-size:10.1px;color:#e8f0ff">Speed</div>
<svg class="a" style="left:386px;top:438px" width="894" height="114">
<defs>
<filter id="wf2" x="19" y="1" width="787" height="113" filterUnits="userSpaceOnUse" color-interpolation-filters="sRGB">
<feTurbulence type="fractalNoise" baseFrequency="0.22 0.55" numOctaves="2" seed="4" result="n"/>
<feColorMatrix in="n" type="matrix" values="2.5 0 0 0 -0.75  2.5 0 0 0 -0.75  2.5 0 0 0 -0.75  0 0 0 0 1"/>
<feComponentTransfer>
<feFuncR type="table" tableValues="0.02 0.03 0.04 0.08 0.11 0.12 0.13 0.15 0.18 0.22 0.3"/>
<feFuncG type="table" tableValues="0.06 0.07 0.11 0.2 0.28 0.32 0.4 0.5 0.58 0.66 0.72"/>
<feFuncB type="table" tableValues="0.32 0.36 0.47 0.68 0.82 0.86 0.76 0.62 0.5 0.45 0.45"/>
</feComponentTransfer>
</filter>
</defs>
<rect x="0" y="0" width="894" height="114" fill="#06063c"/>
<rect x="19" y="1" width="787" height="113" filter="url(#wf2)"/>
<defs><linearGradient id="wfg" x1="0" y1="0" x2="1" y2="0"><stop offset="0" stop-color="#30c060" stop-opacity="0.1"/><stop offset="0.5" stop-color="#30c060" stop-opacity="0.08"/><stop offset="0.72" stop-color="#000050" stop-opacity="0.1"/><stop offset="1" stop-color="#000050" stop-opacity="0.2"/></linearGradient></defs>
<rect x="19" y="1" width="787" height="113" fill="url(#wfg)"/>
<rect x="0" y="0" width="894" height="1.2" fill="#f2f2f2"/>
<rect x="0" y="0" width="1.2" height="114" fill="#f2f2f2"/>
</svg>
<svg class="a" style="left:386px;top:551px" width="894" height="18"><rect x="0" y="0" width="894" height="18" fill="#03032c"/><rect x="0" y="0.6" width="894" height="1.4" fill="#f2f2f2"/><rect x="0" y="0" width="1.2" height="18" fill="#f2f2f2"/><rect x="19.0" y="1.5" width="1" height="3" fill="#e8e8e8"/><rect x="36.8" y="1.5" width="1" height="3" fill="#e8e8e8"/><rect x="54.6" y="1.5" width="1" height="3" fill="#e8e8e8"/><rect x="72.4" y="1.5" width="1" height="3" fill="#e8e8e8"/><rect x="90.2" y="1.5" width="1" height="4.5" fill="#e8e8e8"/><rect x="108.0" y="1.5" width="1" height="3" fill="#e8e8e8"/><rect x="125.8" y="1.5" width="1" height="3" fill="#e8e8e8"/><rect x="143.6" y="1.5" width="1" height="3" fill="#e8e8e8"/><rect x="161.4" y="1.5" width="1" height="3" fill="#e8e8e8"/><rect x="179.2" y="1.5" width="1" height="4.5" fill="#e8e8e8"/><rect x="197.0" y="1.5" width="1" height="3" fill="#e8e8e8"/><rect x="214.8" y="1.5" width="1" height="3" fill="#e8e8e8"/><rect x="232.6" y="1.5" width="1" height="3" fill="#e8e8e8"/><rect x="250.4" y="1.5" width="1" height="3" fill="#e8e8e8"/><rect x="268.2" y="1.5" width="1" height="4.5" fill="#e8e8e8"/><rect x="286.0" y="1.5" width="1" height="3" fill="#e8e8e8"/><rect x="303.8" y="1.5" width="1" height="3" fill="#e8e8e8"/><rect x="321.6" y="1.5" width="1" height="3" fill="#e8e8e8"/><rect x="339.4" y="1.5" width="1" height="3" fill="#e8e8e8"/><rect x="357.2" y="1.5" width="1" height="4.5" fill="#e8e8e8"/><rect x="375.0" y="1.5" width="1" height="3" fill="#e8e8e8"/><rect x="392.8" y="1.5" width="1" height="3" fill="#e8e8e8"/><rect x="410.6" y="1.5" width="1" height="3" fill="#e8e8e8"/><rect x="428.4" y="1.5" width="1" height="3" fill="#e8e8e8"/><rect x="446.2" y="1.5" width="1" height="4.5" fill="#e8e8e8"/><rect x="464.0" y="1.5" width="1" height="3" fill="#e8e8e8"/><rect x="481.8" y="1.5" width="1" height="3" fill="#e8e8e8"/><rect x="499.6" y="1.5" width="1" height="3" fill="#e8e8e8"/><rect x="517.4" y="1.5" width="1" height="3" fill="#e8e8e8"/><rect x="535.2" y="1.5" width="1" height="4.5" fill="#e8e8e8"/><rect x="553.0" y="1.5" width="1" height="3" fill="#e8e8e8"/><rect x="570.8" y="1.5" width="1" height="3" fill="#e8e8e8"/><rect x="588.6" y="1.5" width="1" height="3" fill="#e8e8e8"/><rect x="606.4" y="1.5" width="1" height="3" fill="#e8e8e8"/><rect x="624.2" y="1.5" width="1" height="4.5" fill="#e8e8e8"/><rect x="642.0" y="1.5" width="1" height="3" fill="#e8e8e8"/><rect x="659.8" y="1.5" width="1" height="3" fill="#e8e8e8"/><rect x="677.6" y="1.5" width="1" height="3" fill="#e8e8e8"/><rect x="695.4" y="1.5" width="1" height="3" fill="#e8e8e8"/><rect x="713.2" y="1.5" width="1" height="4.5" fill="#e8e8e8"/><rect x="731.0" y="1.5" width="1" height="3" fill="#e8e8e8"/><rect x="748.8" y="1.5" width="1" height="3" fill="#e8e8e8"/><rect x="766.6" y="1.5" width="1" height="3" fill="#e8e8e8"/><rect x="784.4" y="1.5" width="1" height="3" fill="#e8e8e8"/><rect x="802.2" y="1.5" width="1" height="4.5" fill="#e8e8e8"/><rect x="820.0" y="1.5" width="1" height="3" fill="#e8e8e8"/><rect x="837.8" y="1.5" width="1" height="3" fill="#e8e8e8"/><rect x="855.6" y="1.5" width="1" height="3" fill="#e8e8e8"/><rect x="873.4" y="1.5" width="1" height="3" fill="#e8e8e8"/><rect x="891.2" y="1.5" width="1" height="4.5" fill="#e8e8e8"/></svg>
<div class="t" style="left:471.7px;top:559.5px;width:19px;text-align:center;font-size:8.4px;letter-spacing:-0.2px;color:#f0f0f0">500</div>
<div class="t" style="left:561.6px;top:559.5px;width:19px;text-align:center;font-size:8.4px;letter-spacing:-0.2px;color:#f0f0f0">1000</div>
<div class="t" style="left:651.5px;top:559.5px;width:19px;text-align:center;font-size:8.4px;letter-spacing:-0.2px;color:#f0f0f0">1500</div>
<div class="t" style="left:741.4px;top:559.5px;width:19px;text-align:center;font-size:8.4px;letter-spacing:-0.2px;color:#f0f0f0">2000</div>
<div class="t" style="left:831.3px;top:559.5px;width:19px;text-align:center;font-size:8.4px;letter-spacing:-0.2px;color:#f0f0f0">2500</div>
<div class="t" style="left:921.2px;top:559.5px;width:19px;text-align:center;font-size:8.4px;letter-spacing:-0.2px;color:#f0f0f0">3000</div>
<div class="t" style="left:1011.1px;top:559.5px;width:19px;text-align:center;font-size:8.4px;letter-spacing:-0.2px;color:#f0f0f0">3500</div>
<div class="t" style="left:1101.0px;top:559.5px;width:19px;text-align:center;font-size:8.4px;letter-spacing:-0.2px;color:#f0f0f0">4000</div>
<div class="t" style="left:1190.9px;top:559.5px;width:19px;text-align:center;font-size:8.4px;letter-spacing:-0.2px;color:#f0f0f0">4500</div>
<svg class="a" style="left:386px;top:568px" width="894" height="115"><defs><linearGradient id="ag" x1="0" y1="0" x2="0" y2="1"><stop offset="0" stop-color="#1b5282"/><stop offset="0.55" stop-color="#193a88"/><stop offset="0.75" stop-color="#13149a"/><stop offset="1" stop-color="#1010a0"/></linearGradient></defs><rect x="0" y="0" width="894" height="115" fill="#03032e"/><rect x="0" y="0" width="894" height="1.6" fill="#f8f8f8"/><rect x="0" y="18.6" width="894" height="1" fill="#30304e"/><rect x="0" y="36.2" width="894" height="1" fill="#30304e"/><rect x="0" y="53.8" width="894" height="1" fill="#30304e"/><rect x="0" y="71.4" width="894" height="1" fill="#30304e"/><rect x="0" y="89.0" width="894" height="1" fill="#30304e"/><rect x="0" y="106.6" width="894" height="1" fill="#30304e"/><polygon points="14.0,113.5 16.0,100.0 19.0,94.0 21.0,90.0 22.7,95.8 24.4,89.0 27.1,90.6 29.8,87.0 31.3,97.5 32.8,97.2 35.0,104.2 36.7,97.7 39.0,95.2 40.7,97.2 42.8,91.9 44.2,95.0 46.5,95.4 49.0,90.2 50.9,93.8 53.6,95.6 56.6,97.6 58.9,96.8 61.8,90.0 64.0,96.3 66.0,90.1 69.1,95.3 70.0,92.0 71.0,112.5 72.0,92.0 74.2,93.9 76.1,93.2 78.6,102.6 81.0,90.8 82.5,87.3 85.4,94.4 87.6,90.5 90.1,93.4 92.8,101.8 94.4,95.0 95.8,91.9 98.0,93.4 100.2,95.2 102.5,93.5 104.4,91.3 105.9,96.0 107.2,94.3 109.2,90.5 111.8,96.1 113.8,92.8 115.9,92.8 118.4,95.5 120.9,90.7 123.7,86.9 125.7,89.9 128.7,95.3 131.3,90.4 133.0,97.5 134.6,94.7 136.6,97.4 138.4,90.1 141.4,89.2 142.7,102.6 144.1,93.3 147.0,91.7 149.2,89.2 150.9,95.9 152.3,93.7 154.9,90.2 157.3,92.6 159.3,91.1 160.7,93.0 162.1,89.2 163.7,89.6 166.2,95.1 167.9,89.2 169.5,95.0 172.3,97.0 175.2,93.2 178.2,87.1 180.6,95.4 182.9,96.7 185.6,95.3 187.6,90.1 189.1,89.1 191.6,90.4 194.5,93.0 197.0,95.6 199.1,91.8 201.2,89.2 203.8,95.2 205.1,94.5 206.8,90.5 208.2,91.7 210.2,94.2 211.0,92.0 212.0,112.5 213.0,92.0 215.8,90.3 217.7,94.2 220.2,91.1 222.8,90.4 224.7,90.3 226.8,89.7 229.4,93.8 231.4,94.2 234.0,94.2 236.7,89.1 239.1,93.7 241.8,91.4 243.5,89.9 245.0,93.2 246.6,94.9 249.0,89.5 251.2,100.8 253.2,102.0 255.5,90.2 258.2,95.1 260.7,94.4 262.5,89.5 264.1,91.2 265.8,91.8 268.3,92.7 270.4,91.2 272.5,100.3 275.0,90.5 277.3,91.8 279.8,92.7 281.4,94.7 284.3,90.7 287.3,90.1 289.1,95.8 292.0,96.9 294.5,93.0 297.0,91.1 298.3,89.5 300.8,89.6 303.4,92.1 305.3,94.9 307.7,91.2 309.6,97.3 311.4,101.0 313.1,89.1 315.4,96.4 318.1,89.6 319.8,92.0 322.4,90.7 325.3,98.0 327.4,94.8 330.5,96.7 332.6,97.0 335.4,100.9 337.8,89.3 340.1,91.7 342.8,90.2 344.2,97.1 346.0,91.6 347.4,89.4 349.2,96.3 351.7,91.3 354.4,94.2 357.5,93.2 359.2,95.4 361.0,96.6 362.8,97.7 365.0,93.4 367.1,92.2 369.7,100.8 372.2,97.9 374.4,93.7 376.3,91.5 379.3,90.6 381.1,95.6 383.6,89.5 386.4,93.9 388.6,89.2 391.0,92.4 393.5,90.3 395.4,89.7 398.2,92.7 400.8,97.7 403.0,91.3 405.8,95.5 408.2,89.3 410.4,90.9 413.3,95.7 416.3,90.2 418.1,92.4 420.6,97.0 423.6,91.4 425.2,93.4 427.4,97.6 430.1,89.9 433.1,92.9 434.8,90.1 437.2,95.2 438.6,93.7 441.2,96.2 443.1,91.8 445.4,89.8 447.2,94.9 449.0,94.2 451.6,89.8 453.4,96.4 456.5,90.8 458.4,92.7 460.8,96.4 462.4,92.7 464.0,93.2 465.6,90.8 467.3,97.2 470.1,91.2 472.1,97.5 474.9,90.2 477.8,90.8 479.8,94.3 482.2,93.6 484.3,93.2 486.8,89.9 489.0,97.4 492.0,100.5 493.4,91.4 495.0,92.0 496.0,112.5 497.0,92.0 498.2,97.7 500.6,91.8 503.3,96.5 506.3,89.4 508.6,95.8 510.9,86.9 513.6,90.1 516.2,97.2 518.6,99.5 521.0,89.8 523.7,96.4 525.6,95.7 528.7,95.8 530.7,95.0 532.6,94.3 535.5,94.2 538.2,91.6 541.1,91.2 543.9,91.7 546.0,96.6 547.9,92.4 550.5,89.8 552.0,92.4 554.0,92.3 556.8,89.4 558.7,92.8 561.4,92.3 563.7,90.3 566.6,95.8 568.7,91.7 571.4,91.1 574.0,105.0 576.1,89.6 579.1,89.7 581.2,91.6 584.1,88.5 586.4,92.6 588.0,97.0 590.0,95.1 591.3,93.5 593.4,91.6 596.5,93.8 598.8,104.2 601.9,91.0 604.9,89.9 607.4,99.2 610.0,92.6 611.9,89.2 613.6,99.8 616.2,92.5 618.9,92.0 621.8,94.1 623.3,90.7 625.8,92.2 627.6,93.0 629.9,92.5 632.9,89.6 634.4,88.3 635.9,93.9 637.7,94.5 639.0,95.9 641.2,90.4 643.5,97.2 645.9,91.5 648.8,95.4 650.7,90.0 653.7,97.2 655.8,86.3 657.1,96.9 659.5,96.1 662.2,90.8 665.0,91.5 666.4,101.7 668.2,90.9 670.7,96.9 673.7,89.3 675.8,89.2 677.2,97.3 678.9,91.9 681.2,97.9 682.6,104.8 685.4,92.2 688.0,92.6 691.0,91.2 694.0,94.1 696.8,90.5 698.2,93.4 701.2,97.4 704.3,90.1 705.7,90.0 707.3,96.9 709.8,89.7 712.0,92.0 713.0,112.5 714.0,92.0 715.3,95.0 718.0,92.4 720.1,91.8 722.0,97.5 725.0,96.3 727.2,96.1 729.3,92.7 731.0,92.3 733.4,89.1 735.9,92.2 738.8,96.1 741.8,90.8 744.3,96.8 746.7,97.4 749.0,94.9 750.6,96.5 753.5,93.7 755.1,94.8 757.4,89.0 760.1,97.4 761.7,89.2 764.4,86.5 765.8,91.3 767.2,92.5 769.8,95.9 771.4,90.9 773.2,90.1 774.8,94.8 777.6,92.7 779.9,90.2 782.0,92.0 783.0,112.5 784.0,92.0 786.1,96.2 787.8,89.3 790.2,97.9 792.5,90.5 794.4,95.3 796.1,93.9 798.4,96.6 800.6,90.7 801.9,91.9 804.3,95.9 806.5,96.0 813.4,113.5" fill="url(#ag)"/><polyline points="14.0,113.5 16.0,100.0 19.0,94.0 21.0,90.0 22.7,95.8 24.4,89.0 27.1,90.6 29.8,87.0 31.3,97.5 32.8,97.2 35.0,104.2 36.7,97.7 39.0,95.2 40.7,97.2 42.8,91.9 44.2,95.0 46.5,95.4 49.0,90.2 50.9,93.8 53.6,95.6 56.6,97.6 58.9,96.8 61.8,90.0 64.0,96.3 66.0,90.1 69.1,95.3 70.0,92.0 71.0,112.5 72.0,92.0 74.2,93.9 76.1,93.2 78.6,102.6 81.0,90.8 82.5,87.3 85.4,94.4 87.6,90.5 90.1,93.4 92.8,101.8 94.4,95.0 95.8,91.9 98.0,93.4 100.2,95.2 102.5,93.5 104.4,91.3 105.9,96.0 107.2,94.3 109.2,90.5 111.8,96.1 113.8,92.8 115.9,92.8 118.4,95.5 120.9,90.7 123.7,86.9 125.7,89.9 128.7,95.3 131.3,90.4 133.0,97.5 134.6,94.7 136.6,97.4 138.4,90.1 141.4,89.2 142.7,102.6 144.1,93.3 147.0,91.7 149.2,89.2 150.9,95.9 152.3,93.7 154.9,90.2 157.3,92.6 159.3,91.1 160.7,93.0 162.1,89.2 163.7,89.6 166.2,95.1 167.9,89.2 169.5,95.0 172.3,97.0 175.2,93.2 178.2,87.1 180.6,95.4 182.9,96.7 185.6,95.3 187.6,90.1 189.1,89.1 191.6,90.4 194.5,93.0 197.0,95.6 199.1,91.8 201.2,89.2 203.8,95.2 205.1,94.5 206.8,90.5 208.2,91.7 210.2,94.2 211.0,92.0 212.0,112.5 213.0,92.0 215.8,90.3 217.7,94.2 220.2,91.1 222.8,90.4 224.7,90.3 226.8,89.7 229.4,93.8 231.4,94.2 234.0,94.2 236.7,89.1 239.1,93.7 241.8,91.4 243.5,89.9 245.0,93.2 246.6,94.9 249.0,89.5 251.2,100.8 253.2,102.0 255.5,90.2 258.2,95.1 260.7,94.4 262.5,89.5 264.1,91.2 265.8,91.8 268.3,92.7 270.4,91.2 272.5,100.3 275.0,90.5 277.3,91.8 279.8,92.7 281.4,94.7 284.3,90.7 287.3,90.1 289.1,95.8 292.0,96.9 294.5,93.0 297.0,91.1 298.3,89.5 300.8,89.6 303.4,92.1 305.3,94.9 307.7,91.2 309.6,97.3 311.4,101.0 313.1,89.1 315.4,96.4 318.1,89.6 319.8,92.0 322.4,90.7 325.3,98.0 327.4,94.8 330.5,96.7 332.6,97.0 335.4,100.9 337.8,89.3 340.1,91.7 342.8,90.2 344.2,97.1 346.0,91.6 347.4,89.4 349.2,96.3 351.7,91.3 354.4,94.2 357.5,93.2 359.2,95.4 361.0,96.6 362.8,97.7 365.0,93.4 367.1,92.2 369.7,100.8 372.2,97.9 374.4,93.7 376.3,91.5 379.3,90.6 381.1,95.6 383.6,89.5 386.4,93.9 388.6,89.2 391.0,92.4 393.5,90.3 395.4,89.7 398.2,92.7 400.8,97.7 403.0,91.3 405.8,95.5 408.2,89.3 410.4,90.9 413.3,95.7 416.3,90.2 418.1,92.4 420.6,97.0 423.6,91.4 425.2,93.4 427.4,97.6 430.1,89.9 433.1,92.9 434.8,90.1 437.2,95.2 438.6,93.7 441.2,96.2 443.1,91.8 445.4,89.8 447.2,94.9 449.0,94.2 451.6,89.8 453.4,96.4 456.5,90.8 458.4,92.7 460.8,96.4 462.4,92.7 464.0,93.2 465.6,90.8 467.3,97.2 470.1,91.2 472.1,97.5 474.9,90.2 477.8,90.8 479.8,94.3 482.2,93.6 484.3,93.2 486.8,89.9 489.0,97.4 492.0,100.5 493.4,91.4 495.0,92.0 496.0,112.5 497.0,92.0 498.2,97.7 500.6,91.8 503.3,96.5 506.3,89.4 508.6,95.8 510.9,86.9 513.6,90.1 516.2,97.2 518.6,99.5 521.0,89.8 523.7,96.4 525.6,95.7 528.7,95.8 530.7,95.0 532.6,94.3 535.5,94.2 538.2,91.6 541.1,91.2 543.9,91.7 546.0,96.6 547.9,92.4 550.5,89.8 552.0,92.4 554.0,92.3 556.8,89.4 558.7,92.8 561.4,92.3 563.7,90.3 566.6,95.8 568.7,91.7 571.4,91.1 574.0,105.0 576.1,89.6 579.1,89.7 581.2,91.6 584.1,88.5 586.4,92.6 588.0,97.0 590.0,95.1 591.3,93.5 593.4,91.6 596.5,93.8 598.8,104.2 601.9,91.0 604.9,89.9 607.4,99.2 610.0,92.6 611.9,89.2 613.6,99.8 616.2,92.5 618.9,92.0 621.8,94.1 623.3,90.7 625.8,92.2 627.6,93.0 629.9,92.5 632.9,89.6 634.4,88.3 635.9,93.9 637.7,94.5 639.0,95.9 641.2,90.4 643.5,97.2 645.9,91.5 648.8,95.4 650.7,90.0 653.7,97.2 655.8,86.3 657.1,96.9 659.5,96.1 662.2,90.8 665.0,91.5 666.4,101.7 668.2,90.9 670.7,96.9 673.7,89.3 675.8,89.2 677.2,97.3 678.9,91.9 681.2,97.9 682.6,104.8 685.4,92.2 688.0,92.6 691.0,91.2 694.0,94.1 696.8,90.5 698.2,93.4 701.2,97.4 704.3,90.1 705.7,90.0 707.3,96.9 709.8,89.7 712.0,92.0 713.0,112.5 714.0,92.0 715.3,95.0 718.0,92.4 720.1,91.8 722.0,97.5 725.0,96.3 727.2,96.1 729.3,92.7 731.0,92.3 733.4,89.1 735.9,92.2 738.8,96.1 741.8,90.8 744.3,96.8 746.7,97.4 749.0,94.9 750.6,96.5 753.5,93.7 755.1,94.8 757.4,89.0 760.1,97.4 761.7,89.2 764.4,86.5 765.8,91.3 767.2,92.5 769.8,95.9 771.4,90.9 773.2,90.1 774.8,94.8 777.6,92.7 779.9,90.2 782.0,92.0 783.0,112.5 784.0,92.0 786.1,96.2 787.8,89.3 790.2,97.9 792.5,90.5 794.4,95.3 796.1,93.9 798.4,96.6 800.6,90.7 801.9,91.9 804.3,95.9 806.5,96.0 813.4,113.5" fill="none" stroke="#b8c4d0" stroke-width="0.9"/><polyline points="18.6,0 17,20 14.5,55 12,85 10,100 8,106 7,113" fill="none" stroke="#e03028" stroke-width="1.3"/><polyline points="807,0 810.6,16 812.5,66 815,83 819,99.7 820.8,113" fill="none" stroke="#e03028" stroke-width="1.3"/><rect x="0" y="112.8" width="894" height="1.6" fill="#f8f8f8"/><rect x="0" y="0" width="1.2" height="114" fill="#f2f2f2"/></svg>
<div class="t" style="left:395px;top:565.9px;font-size:9.6px;letter-spacing:-0.4px;color:#f8f8f8;text-shadow:0.35px 0 0 #fff">0 dB</div>
<div class="t" style="left:389px;top:583.5px;font-size:9.6px;letter-spacing:-0.4px;color:#f8f8f8;text-shadow:0.35px 0 0 #fff">-25</div>
<div class="t" style="left:389px;top:601.1px;font-size:9.6px;letter-spacing:-0.4px;color:#f8f8f8;text-shadow:0.35px 0 0 #fff">-50</div>
<div class="t" style="left:389px;top:618.7px;font-size:9.6px;letter-spacing:-0.4px;color:#f8f8f8;text-shadow:0.35px 0 0 #fff">-75</div>
<div class="t" style="left:389px;top:636.3px;font-size:9.6px;letter-spacing:-0.4px;color:#f8f8f8;text-shadow:0.35px 0 0 #fff">-100</div>
<div class="t" style="left:389px;top:653.9px;font-size:9.6px;letter-spacing:-0.4px;color:#f8f8f8;text-shadow:0.35px 0 0 #fff">-125</div>
<div class="t" style="left:389px;top:671.5px;font-size:9.6px;letter-spacing:-0.4px;color:#f8f8f8;text-shadow:0.35px 0 0 #fff">-150</div>
<div class="a" style="left:0;top:698px;width:1280px;height:2px;background:#c8c8c8"></div>
<div class="a" style="left:0;top:420px;width:386px;height:278px;background:#000"></div>
<div class="a" style="left:6px;top:426px;width:22.5px;height:14.5px;background:#143a7c"></div>
<div class="t" style="left:6px;top:429.5px;width:22.5px;text-align:center;font-weight:bold;font-size:8.2px;color:#fff">RMS</div>
<svg class="a" style="left:0;top:0" width="120" height="540"><path d="M6.10,509.20 A83.5,83.5 0 0 1 35.93,445.24" fill="none" stroke="#30c030" stroke-width="3.5" stroke-dasharray="1.6 0.7"/><path d="M35.93,445.24 A83.5,83.5 0 0 1 92.51,425.75" fill="none" stroke="#e02828" stroke-width="3.5" stroke-dasharray="1.6 0.7"/><line x1="7.6" y1="500.6" x2="12.5" y2="501.1" stroke="#c0c0c0" stroke-width="0.8"/><line x1="9.6" y1="489.2" x2="14.4" y2="490.5" stroke="#c0c0c0" stroke-width="0.8"/><line x1="13.7" y1="477.0" x2="18.3" y2="478.9" stroke="#c0c0c0" stroke-width="0.8"/><line x1="20.4" y1="464.3" x2="24.6" y2="467.0" stroke="#c0c0c0" stroke-width="0.8"/><line x1="28.3" y1="454.0" x2="32.0" y2="457.3" stroke="#c0c0c0" stroke-width="0.8"/><line x1="38.8" y1="444.2" x2="40.7" y2="446.6" stroke="#c0c0c0" stroke-width="0.8"/><line x1="58.7" y1="432.7" x2="60.6" y2="437.3" stroke="#c0c0c0" stroke-width="0.8"/><line x1="75.3" y1="428.0" x2="76.1" y2="432.9" stroke="#c0c0c0" stroke-width="0.8"/><line x1="6" y1="505" x2="22" y2="505" stroke="#c02020" stroke-width="0.8"/><line x1="89.6" y1="509.2" x2="35.2" y2="445.5" stroke="#f4f4f4" stroke-width="1.8"/><circle cx="89.6" cy="509.2" r="3.6" fill="#e4f4fa"/></svg>
<div class="t" style="left:70px;top:433.7px;width:16px;text-align:center;font-weight:bold;font-size:8.5px;color:#e8e8e8">+40</div>
<div class="t" style="left:52px;top:439.2px;width:16px;text-align:center;font-weight:bold;font-size:8.5px;color:#e8e8e8">+20</div>
<div class="t" style="left:36px;top:447.7px;width:16px;text-align:center;font-weight:bold;font-size:8.5px;color:#e8e8e8">9</div>
<div class="t" style="left:25.6px;top:457.7px;width:16px;text-align:center;font-weight:bold;font-size:8.5px;color:#e8e8e8">7</div>
<div class="t" style="left:17.6px;top:468.09999999999997px;width:16px;text-align:center;font-weight:bold;font-size:8.5px;color:#e8e8e8">5</div>
<div class="t" style="left:11px;top:479.3px;width:16px;text-align:center;font-weight:bold;font-size:8.5px;color:#e8e8e8">3</div>
<div class="t" style="left:7px;top:492.09999999999997px;width:16px;text-align:center;font-weight:bold;font-size:8.5px;color:#e8e8e8">1</div>
<div class="t" style="left:40px;top:482.5px;width:38px;text-align:center;font-weight:bold;font-size:7.6px;line-height:9px;color:#d8d8d8">S-units<br>Squelch</div>
<div class="a" style="left:6px;top:514px;width:81px;height:11.5px;border:1px solid #707070;background:#080808"></div>
<div class="t" style="left:6px;top:515.8px;width:81px;text-align:center;font-size:10.2px;color:#f0a848">S9 +1 dB</div>
<div class="a" style="left:105.4px;top:426px;width:29.9px;height:15px;background:linear-gradient(#4a4a4a,#333);border:1px solid #5a5a5a;border-radius:1px"></div>
<div class="t" style="left:105.4px;top:429px;width:29.9px;text-align:center;font-weight:bold;font-size:10.2px;letter-spacing:-0.6px;color:#f8c840">AM</div>
<div class="a" style="left:137.6px;top:426px;width:30.7px;height:15px;background:linear-gradient(#4a4a4a,#333);border:1px solid #5a5a5a;border-radius:1px"></div>
<div class="t" style="left:137.6px;top:429px;width:30.7px;text-align:center;font-weight:bold;font-size:10.2px;letter-spacing:-0.6px;color:#f4f4f4">ECSS</div>
<div class="a" style="left:170.6px;top:426px;width:30.4px;height:15px;background:linear-gradient(#4a4a4a,#333);border:1px solid #5a5a5a;border-radius:1px"></div>
<div class="t" style="left:170.6px;top:429px;width:30.4px;text-align:center;font-weight:bold;font-size:10.2px;letter-spacing:-0.6px;color:#f4f4f4">FM</div>
<div class="a" style="left:203.3px;top:426px;width:30.4px;height:15px;background:linear-gradient(#4a4a4a,#333);border:1px solid #5a5a5a;border-radius:1px"></div>
<div class="t" style="left:203.3px;top:429px;width:30.4px;text-align:center;font-weight:bold;font-size:10.2px;letter-spacing:-0.6px;color:#f4f4f4">LSB</div>
<div class="a" style="left:236px;top:426px;width:30.7px;height:15px;background:linear-gradient(#4a4a4a,#333);border:1px solid #5a5a5a;border-radius:1px"></div>
<div class="t" style="left:236px;top:429px;width:30.7px;text-align:center;font-weight:bold;font-size:10.2px;letter-spacing:-0.6px;color:#f4f4f4">USB</div>
<div class="a" style="left:269px;top:426px;width:30.7px;height:15px;background:linear-gradient(#4a4a4a,#333);border:1px solid #5a5a5a;border-radius:1px"></div>
<div class="t" style="left:269px;top:429px;width:30.7px;text-align:center;font-weight:bold;font-size:10.2px;letter-spacing:-0.6px;color:#f4f4f4">CW</div>
<div class="a" style="left:302px;top:426px;width:30.4px;height:15px;background:linear-gradient(#4a4a4a,#333);border:1px solid #5a5a5a;border-radius:1px"></div>
<div class="t" style="left:302px;top:429px;width:30.4px;text-align:center;font-weight:bold;font-size:10.2px;letter-spacing:-0.6px;color:#f4f4f4">DIG</div>
<div class="a" style="left:110px;top:441px;width:20px;height:2px;background:#40ff40;border-radius:1px;box-shadow:0 0 3px #40ff40"></div>
<div class="a" style="left:338px;top:426px;width:43px;height:15px;background:#123c84"></div>
<div class="t" style="left:338px;top:429.5px;width:43px;text-align:center;font-weight:bold;font-size:9.2px;color:#8c9cc4">FreqMgr</div>
<div class="t" style="left:104px;top:455.2px;font-weight:bold;font-size:12.3px;letter-spacing:-0.3px;color:#f4f4f4">LO</div>
<div class="a" style="left:122.7px;top:456px;width:11.5px;height:10.5px;background:#555"></div>
<div class="t" style="left:122.7px;top:457.5px;width:11.5px;text-align:center;font-weight:bold;font-size:8.5px;color:#f0f0f0">A</div>
<div class="t" style="left:104px;top:482.5px;font-weight:bold;font-size:12.6px;letter-spacing:0.9px;color:#e83030">Tune</div>
<div class="t" style="left:187px;top:450.5px;font-weight:bold;font-size:21.5px;letter-spacing:0px;color:#a8a8e8;-webkit-text-stroke:0.9px #a0a0e0;background:linear-gradient(#e0e0ff 0%,#b0b0f0 40%,#8080c8 100%);-webkit-background-clip:text;background-clip:text;-webkit-text-fill-color:transparent;transform-origin:0 0;transform:scaleX(1.24)">14.280.998</div>
<div class="t" style="left:187px;top:478px;font-weight:bold;font-size:21.5px;letter-spacing:0px;color:#a8a8e8;-webkit-text-stroke:0.9px #a0a0e0;background:linear-gradient(#e0e0ff 0%,#b0b0f0 40%,#8080c8 100%);-webkit-background-clip:text;background-clip:text;-webkit-text-fill-color:transparent;transform-origin:0 0;transform:scaleX(1.24)">14.000.000</div>
<div class="a" style="left:326.6px;top:452.6px;width:53px;height:15.6px;background:#fff;border:1px solid #d0d0d0"></div><div class="a" style="left:328px;top:454.1px;width:38px;height:12.6px;background:#000"></div><svg class="a" style="left:368px;top:457.4px" width="10" height="6"><polyline points="1.5,1 5,4.5 8.5,1" fill="none" stroke="#555" stroke-width="1"/></svg><div class="t" style="left:330px;top:455.9px;font-weight:bold;font-size:9.5px;color:#f0b030">-off-</div>
<div class="a" style="left:326.6px;top:479.3px;width:53px;height:15.7px;background:#fff;border:1px solid #d0d0d0"></div><div class="a" style="left:328px;top:480.8px;width:38px;height:12.7px;background:#000"></div><svg class="a" style="left:368px;top:484.1px" width="10" height="6"><polyline points="1.5,1 5,4.5 8.5,1" fill="none" stroke="#555" stroke-width="1"/></svg><div class="t" style="left:330px;top:482.6px;font-weight:bold;font-size:9.5px;color:#f0b030">500 Hz</div>
<div class="a" style="left:326.6px;top:506px;width:53px;height:15.5px;background:#fff;border:1px solid #d0d0d0"></div><div class="a" style="left:328px;top:507.5px;width:38px;height:12.5px;background:#000"></div><svg class="a" style="left:368px;top:510.8px" width="10" height="6"><polyline points="1.5,1 5,4.5 8.5,1" fill="none" stroke="#555" stroke-width="1"/></svg>
<div class="t" style="left:104.2px;top:502px;font-weight:bold;font-size:10.1px;color:#d8e8ff">Volume</div>
<div class="t" style="left:104.2px;top:513.3px;font-weight:bold;font-size:9.8px;color:#d8e8ff">Gain: +63.8dB</div>
<div class="a" style="left:173.4px;top:505.5px;width:62.1px;height:5px;background:linear-gradient(#c8c8c8,#9a9a9a);border-bottom:2px solid #f4f4f4"></div><div class="a" style="left:240.5px;top:505.5px;width:79.9px;height:5px;background:linear-gradient(#c8c8c8,#9a9a9a);border-bottom:2px solid #f4f4f4"></div><div class="a" style="left:236px;top:504.5px;width:4px;height:4.7px;background:#fafafa"></div>
<div class="a" style="left:173.4px;top:518px;width:74.1px;height:5px;background:linear-gradient(#c8c8c8,#9a9a9a);border-bottom:2px solid #f4f4f4"></div><div class="a" style="left:252.5px;top:518px;width:67.9px;height:5px;background:linear-gradient(#c8c8c8,#9a9a9a);border-bottom:2px solid #f4f4f4"></div><div class="a" style="left:248px;top:517px;width:4px;height:4.7px;background:#fafafa"></div>
<div class="a" style="left:103px;top:541px;width:186px;height:15.5px;background:linear-gradient(#48484e,#3a3a40)"></div>
<svg class="a" style="left:103px;top:541px" width="186" height="16"><circle cx="15.4" cy="7.8" r="4.8" fill="#c01818"/><polygon points="40,3.2 47,7.8 40,12.4" fill="#30c030"/><rect x="66" y="3.5" width="3" height="8.5" fill="#f0e020"/><rect x="71.5" y="3.5" width="3" height="8.5" fill="#f0e020"/><rect x="90.5" y="3.3" width="9" height="9" fill="#f8f8f8"/><polygon points="114,7.8 119.5,3.3 119.5,12.3" fill="#2e9ae8"/><polygon points="120.5,7.8 126,3.3 126,12.3" fill="#2e9ae8"/><polygon points="141.5,3.3 147,7.8 141.5,12.3" fill="#2e9ae8"/><polygon points="148,3.3 153.5,7.8 148,12.3" fill="#2e9ae8"/><ellipse cx="168.5" cy="7.8" rx="4.3" ry="3.6" fill="none" stroke="#f0e020" stroke-width="2.2"/><ellipse cx="177.5" cy="7.8" rx="4.3" ry="3.6" fill="none" stroke="#f0e020" stroke-width="2.2"/></svg>
<div class="a" style="left:6px;top:540.5px;width:81px;height:13.5px;background:linear-gradient(#50f050,#20d020)"></div>
<div class="t" style="left:6px;top:543.5px;width:79px;text-align:right;font-weight:bold;font-size:9px;letter-spacing:-0.35px;color:#0a2a3a">SDR-Device [F8]</div>
<div class="a" style="left:6px;top:559.3px;width:81px;height:12.4px;background:linear-gradient(#1c5858,#104444)"></div>
<div class="t" style="left:4px;top:561.8px;width:80px;text-align:center;font-weight:bold;font-size:9.2px;letter-spacing:-0.25px;color:#f4e4c0">Soundcard</div>
<div class="t" style="left:6px;top:561.8px;width:80.5px;text-align:right;font-weight:bold;font-size:9.2px;letter-spacing:-0.1px;color:#f4e4c0">[F5]</div>
<div class="a" style="left:6px;top:577.6px;width:81px;height:12.2px;background:linear-gradient(#1c5858,#104444)"></div>
<div class="t" style="left:4px;top:580.0px;width:80px;text-align:center;font-weight:bold;font-size:9.2px;letter-spacing:-0.25px;color:#f4e4c0">Bandwidth</div>
<div class="t" style="left:6px;top:580.0px;width:80.5px;text-align:right;font-weight:bold;font-size:9.2px;letter-spacing:-0.1px;color:#f4e4c0">[F6]</div>
<div class="a" style="left:6px;top:596px;width:81px;height:12.5px;background:linear-gradient(#1c5858,#104444)"></div>
<div class="t" style="left:4px;top:598.5px;width:80px;text-align:center;font-weight:bold;font-size:9.2px;letter-spacing:-0.25px;color:#f4e4c0">Options</div>
<div class="t" style="left:6px;top:598.5px;width:80.5px;text-align:right;font-weight:bold;font-size:9.2px;letter-spacing:-0.1px;color:#f4e4c0">[F7]</div>
<div class="a" style="left:6px;top:614.4px;width:81px;height:12.1px;background:linear-gradient(90deg,#1a1a14,#3a3a2a 70%,#2a2a20)"></div>
<div class="t" style="left:-3.5px;top:616.8px;width:80px;text-align:center;font-weight:bold;font-size:9.2px;letter-spacing:-0.25px;color:#f4e4c0">Full Screen</div>
<div class="t" style="left:6px;top:616.8px;width:80.5px;text-align:right;font-weight:bold;font-size:9.2px;letter-spacing:-0.1px;color:#f4e4c0">[F11]</div>
<div class="a" style="left:6px;top:636.9px;width:81px;height:15.7px;background:linear-gradient(#50f050,#20d020)"></div>
<div class="t" style="left:4px;top:641.0px;width:80px;text-align:center;font-weight:bold;font-size:9.2px;letter-spacing:-0.25px;color:#0a2a3a">Stop</div>
<div class="t" style="left:6px;top:641.0px;width:80.5px;text-align:right;font-weight:bold;font-size:9.2px;letter-spacing:-0.1px;color:#0a2a3a">[F2]</div>
<div class="a" style="left:6px;top:658px;width:81px;height:16.0px;background:linear-gradient(#1c5858,#104444)"></div>
<div class="t" style="left:4px;top:662.3px;width:80px;text-align:center;font-weight:bold;font-size:9.2px;letter-spacing:-0.25px;color:#f4e4c0">Minimize</div>
<div class="t" style="left:6px;top:662.3px;width:80.5px;text-align:right;font-weight:bold;font-size:9.2px;letter-spacing:-0.1px;color:#f4e4c0">[F3]</div>
<div class="a" style="left:6px;top:679.6px;width:81px;height:15.4px;background:linear-gradient(#1c5858,#104444)"></div>
<div class="t" style="left:4px;top:683.6px;width:80px;text-align:center;font-weight:bold;font-size:9.2px;letter-spacing:-0.25px;color:#f4e4c0">Exit</div>
<div class="t" style="left:6px;top:683.6px;width:80.5px;text-align:right;font-weight:bold;font-size:9.2px;letter-spacing:-0.1px;color:#f4e4c0">[F4]</div>
<div class="a" style="left:104.2px;top:601.9px;width:42.7px;height:15px;background:linear-gradient(#103e88,#0a3072)"></div>
<div class="t" style="left:104.2px;top:605.1px;width:42.7px;text-align:center;font-weight:bold;font-size:9px;letter-spacing:-0.3px;color:#90a0bc">NR</div>
<div class="a" style="left:151.2px;top:601.9px;width:43.4px;height:15px;background:linear-gradient(#103e88,#0a3072)"></div>
<div class="t" style="left:151.2px;top:605.1px;width:43.4px;text-align:center;font-weight:bold;font-size:9px;letter-spacing:-0.3px;color:#90a0bc">NB RF</div>
<div class="a" style="left:198.7px;top:601.9px;width:43.1px;height:15px;background:linear-gradient(#103e88,#0a3072)"></div>
<div class="t" style="left:198.7px;top:605.1px;width:43.1px;text-align:center;font-weight:bold;font-size:9px;letter-spacing:-0.3px;color:#90a0bc">NB IF</div>
<div class="a" style="left:246px;top:601.9px;width:43.0px;height:15px;background:linear-gradient(#103e88,#0a3072)"></div>
<div class="t" style="left:246px;top:605.1px;width:43.0px;text-align:center;font-weight:bold;font-size:9px;letter-spacing:-0.3px;color:#90a0bc">AFC</div>
<div class="a" style="left:303.6px;top:601.9px;width:43.3px;height:15px;background:linear-gradient(#48b8ff,#2090e8)"></div>
<div class="t" style="left:303.6px;top:605.1px;width:43.3px;text-align:center;font-weight:bold;font-size:9px;letter-spacing:-0.3px;color:#ffffff">RF+8</div>
<div class="a" style="left:104.2px;top:621px;width:42.7px;height:15px;background:linear-gradient(#103e88,#0a3072)"></div>
<div class="t" style="left:104.2px;top:624.2px;width:42.7px;text-align:center;font-weight:bold;font-size:9px;letter-spacing:-0.3px;color:#90a0bc">Mute</div>
<div class="a" style="left:151.2px;top:621px;width:43.4px;height:15px;background:linear-gradient(#103e88,#0a3072)"></div>
<div class="t" style="left:151.2px;top:624.2px;width:43.4px;text-align:center;font-weight:bold;font-size:9px;letter-spacing:-0.3px;color:#90a0bc">AGC Off</div>
<div class="a" style="left:198.7px;top:621px;width:43.1px;height:15px;background:linear-gradient(#103e88,#0a3072)"></div>
<div class="t" style="left:198.7px;top:624.2px;width:43.1px;text-align:center;font-weight:bold;font-size:9px;letter-spacing:-0.3px;color:#90a0bc">Notch</div>
<div class="a" style="left:246px;top:621px;width:43.0px;height:15px;background:linear-gradient(#48b8ff,#2090e8)"></div>
<div class="t" style="left:246px;top:624.2px;width:43.0px;text-align:center;font-weight:bold;font-size:9px;letter-spacing:-0.3px;color:#ffffff">ANotch</div>
<div class="t" style="left:289px;top:585.5px;width:16px;text-align:center;font-weight:bold;font-size:9px;color:#f4f4f4">RF</div>
<div class="a" style="left:295.5px;top:597px;width:2.5px;height:71px;background:#f0f0f0"></div>
<div class="a" style="left:294px;top:657px;width:5px;height:5px;background:#fff;border:1px solid #888"></div>
<div class="t" style="left:104px;top:660.8px;font-size:15.7px;color:#44e044">05/01/2025 09:25:51</div>
<div class="a" style="left:105px;top:685px;width:94px;height:2px;background:#e8e8e8"></div>
<div class="a" style="left:197.5px;top:680px;width:1.5px;height:7px;background:#e8e8e8"></div>
<div class="a" style="left:105px;top:679.5px;width:5px;height:5px;background:#30e030"></div>
<div class="a" style="left:105px;top:693.5px;width:94px;height:2px;background:#e8e8e8"></div>
<div class="a" style="left:197.5px;top:688.5px;width:1.5px;height:7px;background:#e8e8e8"></div>
<div class="a" style="left:105px;top:688.5px;width:5px;height:5px;background:#f0e020"></div>
<div class="t" style="left:203.3px;top:678.2px;font-family:'Liberation Mono',monospace;font-size:9.4px;line-height:9px;color:#d8d8d8">CPU HDSDR:  5%<br>CPU Total:  6%</div>
<div class="a" style="left:0;top:0;width:1px;height:700px;background:#c4c4c4"></div>
<div class="a" style="left:88.5px;top:13px;width:315px;height:391px;background:#f0f0f0;border:1px solid #a8a8a8;border-radius:7px;box-shadow:0 0 2px rgba(0,0,0,0.4)"></div><div class="a" style="left:89.5px;top:14px;width:313px;height:21px;background:#f3f3f5;border-radius:6px 6px 0 0"></div><div class="t" style="left:91.8px;top:19.20px;font-size:9.8px;color:#1a1a1a;letter-spacing:0.22px">RF front-end frequency options</div><svg class="a" style="left:385px;top:18.5px" width="11" height="11"><path d="M1,1 L10,10 M10,1 L1,10" stroke="#202020" stroke-width="1.1"/></svg><div class="t" style="left:166.5px;top:35.22px;font-size:9.9px;color:#1a1a1a;font-weight:bold;letter-spacing:-0.05px">SDR hardware coupling</div><div class="a" style="left:97.4px;top:52.2px;width:11px;height:11px;border-radius:50%;border:1px solid #6e6e6e;background:#f6f6f6"></div><div class="t" style="left:110.9px;top:53.00px;font-size:9.8px;color:#1a1a1a;letter-spacing:-0.2px">SDR hardware connected to antenna (default)</div><div class="a" style="left:97.4px;top:73.5px;width:11px;height:11px;border-radius:50%;border:1px solid #6e6e6e;background:#f6f6f6"></div><div class="t" style="left:110.9px;top:74.30px;font-size:9.8px;color:#1a1a1a;letter-spacing:-0.2px">SDR on IF output, which is controlled</div><div class="a" style="left:273px;top:70px;width:82px;height:18.5px;background:#fdfdfd;border:1px solid #d4d4d4;border-bottom:1px solid #9a9a9a;border-radius:3px"></div><div class="t" style="left:278px;top:74.50px;font-size:9.8px;color:#1a1a1a;letter-spacing:-0.2px">by Omni-Rig1</div><svg class="a" style="left:341px;top:76.5px" width="9" height="6"><polyline points="1,1 4.5,4.5 8,1" fill="none" stroke="#555" stroke-width="0.9"/></svg><div class="a" style="left:108.6px;top:96.4px;width:287.2px;height:53px;border:1px solid #dadada;border-radius:2px"></div><div class="a" style="left:113px;top:93px;width:47px;height:6px;background:#f0f0f0"></div><div class="t" style="left:115px;top:92.50px;font-size:9.8px;color:#1a1a1a;letter-spacing:-0.2px">Sync Mode</div><div class="a" style="left:115.4px;top:103.3px;width:11px;height:11px;border-radius:50%;background:#0a5fb4"></div><div class="a" style="left:118.7px;top:106.6px;width:4.4px;height:4.4px;border-radius:50%;background:#fff"></div><div class="t" style="left:129px;top:104.10px;font-size:9.8px;color:#1a1a1a;letter-spacing:-0.2px">Full sync in both directions</div><div class="a" style="left:115.4px;top:114.3px;width:11px;height:11px;border-radius:50%;border:1px solid #6e6e6e;background:#f6f6f6"></div><div class="t" style="left:129px;top:115.10px;font-size:9.8px;color:#1a1a1a;letter-spacing:-0.2px">Independent Tune in HDSDR</div><div class="a" style="left:115.4px;top:125.2px;width:11px;height:11px;border-radius:50%;border:1px solid #6e6e6e;background:#f6f6f6"></div><div class="t" style="left:129px;top:126.00px;font-size:9.8px;color:#1a1a1a;letter-spacing:-0.2px">Independent Tune, but sync on external change</div><div class="a" style="left:115.4px;top:136.4px;width:11px;height:11px;border-radius:50%;border:1px solid #6e6e6e;background:#f6f6f6"></div><div class="t" style="left:129px;top:137.20px;font-size:9.8px;color:#1a1a1a;letter-spacing:-0.2px">Full sync, except LO</div><div class="t" style="left:113.7px;top:154.70px;font-size:9.8px;color:#1a1a1a;letter-spacing:-0.2px">IF-frequency:</div><div class="t" style="left:233.5px;top:154.70px;font-size:9.8px;color:#1a1a1a;letter-spacing:-0.2px">Global Offset:</div><div class="a" style="left:113px;top:171px;width:63.0px;height:16.5px;background:#fff;border:1px solid #e2e2e2;border-bottom:1px solid #b8b8b8;border-radius:2px"></div><div class="t" style="left:116.0px;top:174.8px;font-size:9.8px;color:#1a1a1a">10700000</div><div class="t" style="left:182.6px;top:174.20px;font-size:9.8px;color:#1a1a1a;letter-spacing:-0.2px">[Hz]</div><div class="a" style="left:227px;top:171px;width:63.5px;height:16.5px;background:#fff;border:1px solid #e2e2e2;border-bottom:1px solid #b8b8b8;border-radius:2px"></div><div class="t" style="left:230.0px;top:174.8px;font-size:9.8px;color:#1a1a1a">0</div><div class="t" style="left:297px;top:174.20px;font-size:9.8px;color:#1a1a1a;letter-spacing:-0.2px">[Hz]</div><div class="t" style="left:112.3px;top:194.60px;font-size:9.8px;color:#1a1a1a;letter-spacing:-0.2px">Additional Offset per Mode in Hz</div><div class="a" style="left:112.9px;top:210px;width:282px;height:29.5px;background:#fff;box-shadow:0 1px 1px rgba(0,0,0,0.25)"></div><div class="a" style="left:112.9px;top:210px;width:282px;height:14.6px;background:linear-gradient(#fcfcfc,#ececec)"></div><div class="t" style="left:118.4px;top:212.50px;font-size:9.8px;color:#1a1a1a;letter-spacing:-0.2px">AM</div><div class="t" style="left:114.9px;top:226.50px;font-size:9.8px;color:#1a1a1a;letter-spacing:-0.2px">0</div><div class="a" style="left:148.2px;top:210px;width:1px;height:29.5px;background:#e4e4e4"></div><div class="t" style="left:153.65px;top:212.50px;font-size:9.8px;color:#1a1a1a;letter-spacing:-0.2px">FM</div><div class="t" style="left:153.65px;top:225.70px;font-size:9.8px;color:#1a1a1a;letter-spacing:-0.2px">0</div><div class="a" style="left:183.4px;top:210px;width:1px;height:29.5px;background:#e4e4e4"></div><div class="t" style="left:188.9px;top:212.50px;font-size:9.8px;color:#1a1a1a;letter-spacing:-0.2px">LSB</div><div class="t" style="left:188.9px;top:225.70px;font-size:9.8px;color:#1a1a1a;letter-spacing:-0.2px">0</div><div class="a" style="left:218.7px;top:210px;width:1px;height:29.5px;background:#e4e4e4"></div><div class="t" style="left:224.15px;top:212.50px;font-size:9.8px;color:#1a1a1a;letter-spacing:-0.2px">USB</div><div class="t" style="left:224.15px;top:225.70px;font-size:9.8px;color:#1a1a1a;letter-spacing:-0.2px">0</div><div class="a" style="left:253.9px;top:210px;width:1px;height:29.5px;background:#e4e4e4"></div><div class="t" style="left:259.4px;top:212.50px;font-size:9.8px;color:#1a1a1a;letter-spacing:-0.2px">CW_U</div><div class="t" style="left:259.4px;top:225.70px;font-size:9.8px;color:#1a1a1a;letter-spacing:-0.2px">0</div><div class="a" style="left:289.1px;top:210px;width:1px;height:29.5px;background:#e4e4e4"></div><div class="t" style="left:294.65px;top:212.50px;font-size:9.8px;color:#1a1a1a;letter-spacing:-0.2px">CW_L</div><div class="t" style="left:294.65px;top:225.70px;font-size:9.8px;color:#1a1a1a;letter-spacing:-0.2px">0</div><div class="a" style="left:324.4px;top:210px;width:1px;height:29.5px;background:#e4e4e4"></div><div class="t" style="left:329.9px;top:212.50px;font-size:9.8px;color:#1a1a1a;letter-spacing:-0.2px">DIG_U</div><div class="t" style="left:329.9px;top:225.70px;font-size:9.8px;color:#1a1a1a;letter-spacing:-0.2px">0</div><div class="a" style="left:359.6px;top:210px;width:1px;height:29.5px;background:#e4e4e4"></div><div class="t" style="left:365.15px;top:212.50px;font-size:9.8px;color:#1a1a1a;letter-spacing:-0.2px">DIG_L</div><div class="t" style="left:365.15px;top:225.70px;font-size:9.8px;color:#1a1a1a;letter-spacing:-0.2px">0</div><div class="a" style="left:112.3px;top:248.1px;width:10.6px;height:10.6px;border:1px solid #7a7a7a;border-radius:2px;background:#f6f6f6"></div><div class="t" style="left:125.4px;top:248.60px;font-size:9.8px;color:#1a1a1a;letter-spacing:-0.2px">Mirror RF Spectrum in general</div><div class="a" style="left:112.3px;top:262.7px;width:10.6px;height:10.6px;border:1px solid #7a7a7a;border-radius:2px;background:#f6f6f6"></div><div class="t" style="left:125.4px;top:263.20px;font-size:9.8px;color:#1a1a1a;letter-spacing:-0.2px">Mirror RF Spectrum for Tune &gt;=</div><div class="a" style="left:112.3px;top:276.1px;width:10.6px;height:10.6px;border:1px solid #7a7a7a;border-radius:2px;background:#f6f6f6"></div><div class="t" style="left:125.4px;top:276.60px;font-size:9.8px;color:#1a1a1a;letter-spacing:-0.2px">operate CW in lower sideband (LSB)</div><div class="a" style="left:112.3px;top:289.5px;width:10.6px;height:10.6px;border:1px solid #7a7a7a;border-radius:2px;background:#f6f6f6"></div><div class="t" style="left:125.4px;top:290.00px;font-size:9.8px;color:#1a1a1a;letter-spacing:-0.2px">Swap CW and CWR for Omni-Rig</div><div class="a" style="left:262.9px;top:260px;width:42.1px;height:16.0px;background:#fff;border:1px solid #e2e2e2;border-bottom:1px solid #b8b8b8;border-radius:2px"></div><div class="t" style="left:265.9px;top:263.5px;font-size:9.8px;color:#1a1a1a">0</div><div class="t" style="left:307.9px;top:263.20px;font-size:9.8px;color:#1a1a1a;letter-spacing:-0.2px">kHz</div><div class="a" style="left:97.3px;top:309.7px;width:11px;height:11px;border-radius:50%;background:#0a5fb4"></div><div class="a" style="left:100.6px;top:313.0px;width:4.4px;height:4.4px;border-radius:50%;background:#fff"></div><div class="t" style="left:111px;top:310.50px;font-size:9.8px;color:#1a1a1a;letter-spacing:-0.2px">SDR hardware on Down/Up-Converter</div><div class="t" style="left:113.6px;top:322.70px;font-size:9.8px;color:#1a1a1a;letter-spacing:-0.2px">LO Frequency of&nbsp; Down/Up-Converter in Hz:</div><div class="a" style="left:304px;top:320px;width:64.4px;height:16.5px;background:#fff;border:1px solid #e2e2e2;border-bottom:1px solid #b8b8b8;border-radius:2px"></div><div class="a" style="left:304px;top:335.0px;width:64.4px;height:2px;background:#0a5fb4"></div><div class="a" style="left:306.3px;top:322.0px;width:46.5px;height:10.5px;background:#0a5cc8"></div><div class="t" style="left:306.5px;top:323.0px;font-size:9.8px;letter-spacing:-0.45px;color:#fff">150000000</div><div class="a" style="left:97.3px;top:345.1px;width:11px;height:11px;border-radius:50%;border:1px solid #6e6e6e;background:#f6f6f6"></div><div class="t" style="left:111px;top:346.00px;font-size:9.8px;color:#1a1a1a;letter-spacing:-0.2px">SDR hardware in undersampling mode</div><div class="t" style="left:113.6px;top:357.70px;font-size:9.8px;color:#1a1a1a;letter-spacing:-0.2px">Samplerate of Analog-Digital Converter in Hz:</div><div class="a" style="left:304.4px;top:355.3px;width:63.6px;height:16.7px;background:#fff;border:1px solid #e2e2e2;border-bottom:1px solid #b8b8b8;border-radius:2px"></div><div class="t" style="left:307.4px;top:359.1px;font-size:9.8px;color:#1a1a1a">80000000</div><div class="a" style="left:215.8px;top:379.4px;width:61.4px;height:17.8px;background:#fdfdfd;border:1px solid #d0d0d0;border-bottom:1px solid #a8a8a8;border-radius:3px"></div><div class="t" style="left:215.8px;top:383.5px;width:61.4px;text-align:center;font-size:9.3px;color:#1a1a1a"><u>O</u>K</div>
<div class="t" style="left:494.5px;top:131.8px;font-size:28.5px;letter-spacing:0.18px;color:#f4b478">Signal at 164 MHz, Down Convertr at 14 with IF 150 MHz</div>
<svg class="a" style="left:0;top:0" width="1280" height="700"><line x1="876" y1="174.5" x2="725" y2="323.5" stroke="#fff" stroke-width="2.6"/><polygon points="719.3,329.8 722,317.5 731.5,327" fill="#fff"/></svg>
</body></html>
